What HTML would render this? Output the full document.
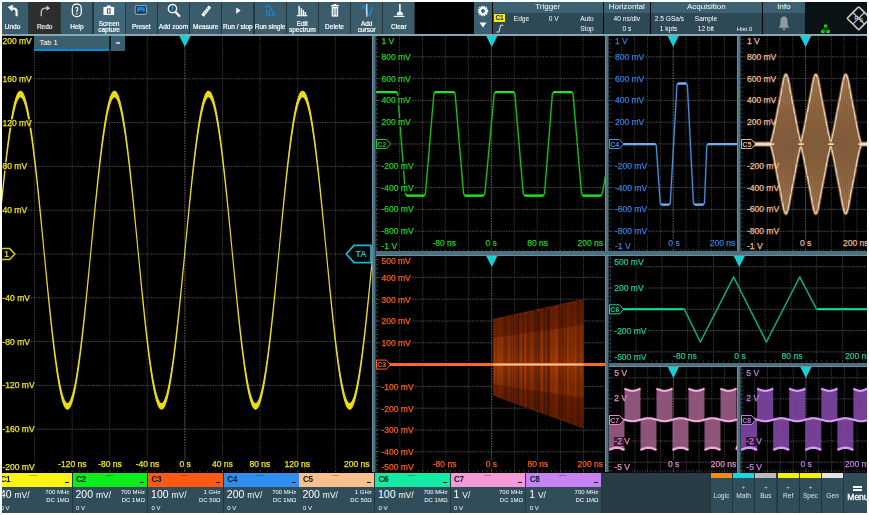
<!DOCTYPE html>
<html><head><meta charset="utf-8"><title>Oscilloscope</title>
<style>
html,body{margin:0;padding:0;background:#fff;}
body{width:869px;height:515px;position:relative;overflow:hidden;font-family:"Liberation Sans", sans-serif;}
#scr{position:absolute;left:2px;top:2px;width:865px;height:510.6px;background:#000;overflow:hidden;}
.abs{position:absolute;}
.tb{position:absolute;top:0;height:31.8px;background:#3a5c6b;color:#fff;font-size:6.5px;text-align:center;line-height:6.2px;}
.tb .lb{position:absolute;left:-4px;right:-4px;bottom:3.4px;white-space:nowrap;-webkit-text-stroke:.2px currentColor;}
.tb .lb2{position:absolute;left:-4px;right:-4px;bottom:0.8px;white-space:nowrap;-webkit-text-stroke:.2px currentColor;}
.tb svg{position:absolute;left:50%;top:1.2px;margin-left:-7.8px;}
.pn{position:absolute;top:0;height:31.8px;background:#2d4955;color:#fff;font-size:6.6px;}
.pn .tt{position:absolute;left:0;right:0;top:0;height:10.5px;background:#3c6271;text-align:center;line-height:10.5px;font-size:8px;}
.pn span{position:absolute;white-space:nowrap;line-height:8px;}
.plot{position:absolute;background:#000;overflow:hidden;}
.yl,.xl,.xr{-webkit-text-stroke:.25px currentColor;}
.yl{position:absolute;left:5px;font-size:8.5px;line-height:9px;white-space:nowrap;background:rgba(0,0,0,.6);padding:0 1px 0 0;}
.xl{position:absolute;font-size:8.5px;line-height:9px;white-space:nowrap;transform:translateX(-50%);background:rgba(0,0,0,.6);}
.xr{position:absolute;font-size:8.5px;line-height:9px;white-space:nowrap;background:rgba(0,0,0,.6);}
.ch{position:absolute;top:470.5px;height:40.1px;background:#304d59;color:#fff;}
.ch .hd{position:absolute;left:0;right:0;top:0;height:14px;color:#0a1a20;font-weight:bold;font-size:8.2px;letter-spacing:-.4px;line-height:14px;}
.ch .hd b{position:absolute;left:3.5px;}
.ch .hd i{position:absolute;right:3px;bottom:3.2px;width:4px;height:1.6px;background:#111;}
.ch .hd u{position:absolute;left:33px;top:2px;width:7px;height:1px;background:rgba(0,0,0,.25);}
.ch .sc{position:absolute;left:3px;top:15.5px;font-size:10.5px;line-height:12px;white-space:nowrap;}
.ch .sc small{font-size:8.5px;}
.ch .r1,.ch .r2{position:absolute;right:2.5px;font-size:6px;line-height:7px;white-space:nowrap;text-align:right;}
.ch .r1{top:16px;} .ch .r2{top:24px;}
.ch .of{position:absolute;left:3.5px;top:32.5px;font-size:6px;line-height:7px;}
.rb{position:absolute;top:470.5px;height:40.1px;background:#304d59;color:#fff;font-size:6.6px;text-align:center;}
.rb .cb{position:absolute;left:0;right:0;top:0;height:5px;}
.rb .pl{position:absolute;left:0;right:0;top:11.6px;font-size:6px;line-height:6px;color:#d0d8dc}
.rb .lb{position:absolute;left:-3px;right:-3px;top:19.6px;line-height:8px;color:#dde4e6}
#in{position:absolute;left:0;top:0;width:865px;height:510.6px;filter:blur(0.7px);}
</style></head><body><div id="scr"><div id="in">

<div class="tb" style="left:-5.1px;width:31.2px;background:#3a5c6b;color:#fff"><svg width="15.6" height="14.5" viewBox="0 0 14 13"><path d="M10.4 11.8 V7.6 Q10.4 5 7.8 5 H6" fill="none" stroke="#fff" stroke-width="1.9"/><path d="M2.4 3.6 L7.2 1.6 L6.4 7.6 Z" fill="#fff"/></svg><div class="lb">Undo</div></div>
<div class="tb" style="left:27.1px;width:31.2px;background:#2e2e2e;color:#eee"><svg width="15.6" height="14.5" viewBox="0 0 14 13"><path d="M3.8 11.8 V8.6 Q3.8 4.6 7.6 4.6 H9" fill="none" stroke="#c8c8c8" stroke-width="1.1"/><path d="M11.8 4.6 L8.6 2.2 V7 Z" fill="#c8c8c8"/></svg><div class="lb">Redo</div></div>
<div class="tb" style="left:59.3px;width:31.2px;background:#3a5c6b;color:#fff"><svg width="15.6" height="14.5" viewBox="0 0 14 13"><rect x="3" y="1" width="8" height="11.2" rx="3.6" fill="none" stroke="#fff" stroke-width="1.1"/><path d="M5.8 4.4 Q7.9 3.2 7.9 5.2 Q7.9 6.3 7 7 L7 8.2" fill="none" stroke="#fff" stroke-width="1"/><circle cx="7" cy="9.7" r=".65" fill="#fff"/></svg><div class="lb">Help</div></div>
<div class="tb" style="left:91.5px;width:31.2px;background:#41687a;color:#fff"><svg width="15.6" height="14.5" viewBox="0 0 14 13"><path d="M2.2 3.6 H4.8 L5.6 2.2 H8.4 L9.2 3.6 H11.8 V10.8 H2.2 Z" fill="#fff"/><rect x="5.3" y="4.8" width="3.4" height="4.8" fill="#3f6677"/><rect x="6.35" y="5.6" width="1.3" height="3.2" fill="#fff"/></svg><div class="lb2">Screen<br>capture</div></div>
<div class="tb" style="left:123.7px;width:31.2px;background:#3a5c6b;color:#fff"><svg width="15.6" height="14.5" viewBox="0 0 14 13"><rect x="2" y="2.2" width="10.2" height="8" rx="1.4" fill="#1a3a55" stroke="#8aa2ad" stroke-width="1"/><rect x="3.6" y="3.6" width="7" height="4.4" fill="#1583d8"/><rect x="5.2" y="6.8" width="3.8" height="2.2" fill="#1a3a55"/></svg><div class="lb">Preset</div></div>
<div class="tb" style="left:155.9px;width:31.2px;background:#3a5c6b;color:#fff"><svg width="15.6" height="14.5" viewBox="0 0 14 13"><circle cx="5.8" cy="5" r="3.7" fill="#27434f" stroke="#fff" stroke-width="1.3"/><path d="M8.6 8 L12 11.6" stroke="#fff" stroke-width="2" stroke-linecap="round"/><path d="M5.8 2.4 L7.8 4.8 H6.6 V7.2 H5 V4.8 H3.8 Z" fill="#1a8ae0"/></svg><div class="lb">Add zoom</div></div>
<div class="tb" style="left:188.1px;width:31.2px;background:#3a5c6b;color:#fff"><svg width="15.6" height="14.5" viewBox="0 0 14 13"><path d="M3 10.6 L9.6 2.2 L11.8 4 L5.2 12.4 Z" fill="#fff"/><path d="M5.4 8.4 L6.6 9.4 M6.8 6.6 L8 7.6 M8.2 4.8 L9.4 5.8" stroke="#3a5c6b" stroke-width=".7"/></svg><div class="lb">Measure</div></div>
<div class="tb" style="left:220.3px;width:31.2px;background:#3a5c6b;color:#fff"><svg width="15.6" height="14.5" viewBox="0 0 14 13"><path d="M5.6 4 L9.6 6.8 L5.6 9.6 Z" fill="#fff"/></svg><div class="lb">Run / stop</div></div>
<div class="tb" style="left:252.5px;width:31.2px;background:#3a5c6b;color:#fff"><svg width="15.6" height="14.5" viewBox="0 0 14 13"><path d="M2.8 4.4 Q5 0.6 7 3.6 L9.6 8" fill="none" stroke="#1a8ae0" stroke-width="1.2"/><path d="M4.4 5.4 V11.6" fill="none" stroke="#1a8ae0" stroke-width="1"/><text x="5" y="11.4" font-size="6.2" font-weight="bold" fill="#1a8ae0" font-family="Liberation Sans, sans-serif">1x</text></svg><div class="lb">Run single</div></div>
<div class="tb" style="left:284.7px;width:31.2px;background:#3a5c6b;color:#fff"><svg width="15.6" height="14.5" viewBox="0 0 14 13"><path d="M2.4 11.4 H12" stroke="#fff" stroke-width="1"/><path d="M4.6 11.4 V2.4 M6.6 11.4 V4.6 M8.4 11.4 V6.2 M10.2 11.4 V8" stroke="#fff" stroke-width="1.3"/></svg><div class="lb2">Edit<br>spectrum</div></div>
<div class="tb" style="left:316.9px;width:31.2px;background:#3a5c6b;color:#fff"><svg width="15.6" height="14.5" viewBox="0 0 14 13"><rect x="4.2" y="3.6" width="5.8" height="8.6" fill="#fff"/><rect x="3.6" y="1.8" width="7" height="1.3" fill="#fff"/><rect x="5.8" y="0.9" width="2.6" height="1" fill="#fff"/><path d="M5.7 4.8 V11 M7.1 4.8 V11 M8.5 4.8 V11" stroke="#3a5c6b" stroke-width=".6"/></svg><div class="lb">Delete</div></div>
<div class="tb" style="left:349.1px;width:31.2px;background:#3a5c6b;color:#fff"><svg width="15.6" height="14.5" viewBox="0 0 14 13"><path d="M2.4 5.6 Q3.6 0.2 5.4 4.4 L7.8 9.6 Q9.6 13 10.6 8 L11.6 3.6" fill="none" stroke="#1a8ae0" stroke-width="1.2"/><path d="M7 1 V12.4" stroke="#fff" stroke-width="1"/></svg><div class="lb2">Add<br>cursor</div></div>
<div class="tb" style="left:381.3px;width:31.2px;background:#3a5c6b;color:#fff"><svg width="15.6" height="14.5" viewBox="0 0 14 13"><path d="M8 1 V8" stroke="#fff" stroke-width="1.4"/><path d="M5 11 L6 8 H10 L11 11 Z" fill="#fff"/><path d="M2.4 12 H12.2" stroke="#fff" stroke-width=".9"/></svg><div class="lb">Clear</div></div>
<div class="abs" style="left:0;top:0;width:413.0px;height:31.8px;background:#24383f;z-index:-1"></div>
<div class="pn" style="left:472.2px;width:18px;background:#3a6070"><svg class="abs" style="left:2px;top:1px" width="14" height="30" viewBox="0 0 14 30"><circle cx="7" cy="8" r="3.1" fill="none" stroke="#fff" stroke-width="2.3"/><circle cx="7" cy="8" r="4.6" fill="none" stroke="#fff" stroke-width="1.3" stroke-dasharray="1.45 0.96"/><path d="M3.6 19.5 H10.4 L7 24.5 Z" fill="#fff"/></svg></div>
<div class="pn" style="left:490.8px;width:110px"><div class="tt">Trigger</div><span style="left:1.5px;top:12.4px;width:10.4px;height:7.6px;background:#f4ec1a;color:#222;font-weight:bold;font-size:6.4px;line-height:7.6px;text-align:center">C1</span><span style="left:21px;top:12.5px">Edge</span><span style="left:56px;top:12.5px">0 V</span><span style="right:9px;top:12.5px">Auto</span><span style="right:9px;top:22.5px">Stop</span><svg class="abs" style="left:3px;top:22px" width="8" height="9" viewBox="0 0 8 9"><path d="M0.5 8 H3 L4.6 1.2 H7.4" fill="none" stroke="#fff" stroke-width=".9"/></svg></div>
<div class="pn" style="left:601.6px;width:46.4px"><div class="tt">Horizontal</div><span style="left:0;right:0;top:12.5px;text-align:center">40 ns/div</span><span style="left:0;right:0;top:22.5px;text-align:center">0 s</span></div>
<div class="pn" style="left:648.8px;width:111px"><div class="tt">Acquisition</div><span style="left:4px;top:12.5px">2.5 GSa/s</span><span style="left:44px;top:12.5px">Sample</span><span style="left:9px;top:22.5px">1 kpts</span><span style="left:47px;top:22.5px">12 bit</span><span style="left:86px;top:22.5px;font-size:6px">Hist 0</span></div>
<div class="pn" style="left:760.8px;width:42px"><div class="tt">Info</div><svg class="abs" style="left:14px;top:13px" width="14" height="17" viewBox="0 0 14 17"><path d="M7 1.4 C9.8 1.4 10.6 4 10.6 7.4 C10.6 10.6 11.4 11.8 12.4 12.8 H1.6 C2.6 11.8 3.4 10.6 3.4 7.4 C3.4 4 4.2 1.4 7 1.4 Z" fill="#8f9a9f"/><rect x="5.6" y="13.4" width="2.8" height="1.6" fill="#8f9a9f"/></svg></div>
<div class="abs" style="left:803.0px;top:0;width:62px;height:31.8px;background:#0b1213"><svg class="abs" style="left:0;top:0" width="62" height="32" viewBox="0 0 62 32"><circle cx="20.5" cy="24" r="1.7" fill="#18e018"/><circle cx="18" cy="29.4" r="1.9" fill="#18e018"/><circle cx="23" cy="29.4" r="1.9" fill="#18e018"/><path d="M20.5 24 L18 29.4 H23 Z" fill="none" stroke="#0f8a0f" stroke-width=".8"/><g transform="translate(53.7,16.3) rotate(45)" fill="none" stroke="#c4c8c8" stroke-width="1.6"><rect x="-8.2" y="-8.2" width="16.4" height="16.4" rx="1"/><path d="M-8.2 0 H8.2 M0 -8.2 V8.2" stroke-width="1.2"/></g><text x="49.4" y="17.6" font-size="5.6" fill="#c4c8c8" font-family="Liberation Sans, sans-serif" font-weight="bold">R</text><text x="54.6" y="20" font-size="5.6" fill="#c4c8c8" font-family="Liberation Sans, sans-serif" font-weight="bold">S</text></svg></div>
<div class="abs" style="left:0;top:31.8px;width:865px;height:2px;background:#86a8b5"></div>
<div class="plot" style="left:0.0px;top:33.8px;width:369.5px;height:436.7px;color:#efe312"><svg class="abs" style="left:0;top:0" width="369.5" height="436.7" viewBox="0 0 369.5 436.7"><g stroke="#7c7c7c" stroke-width="1" stroke-dasharray="1.5 1.1" fill="none" opacity=".64"><path d="M32.5 0 V436.7" opacity=".72"/><path d="M70.1 0 V436.7" opacity=".72"/><path d="M107.7 0 V436.7" opacity=".72"/><path d="M145.3 0 V436.7" opacity=".72"/><path d="M182.9 0 V436.7" opacity=".72"/><path d="M220.5 0 V436.7" opacity=".72"/><path d="M258.1 0 V436.7" opacity=".72"/><path d="M295.7 0 V436.7" opacity=".72"/><path d="M333.3 0 V436.7" opacity=".72"/><path d="M0 42.8 H369.5" /><path d="M0 86.6 H369.5" /><path d="M0 130.4 H369.5" /><path d="M0 174.2 H369.5" /><path d="M0 218.0 H369.5" /><path d="M0 261.8 H369.5" /><path d="M0 305.6 H369.5" /><path d="M0 349.4 H369.5" /><path d="M0 393.2 H369.5" /></g><path d="M182.9 0 V436.7" stroke="#9a9a9a" stroke-width=".9" stroke-dasharray="1.3 1.5" opacity=".6"/><g stroke="#888" stroke-width=".7" opacity=".5"><path d="M2.4 434.2 V436.7"/><path d="M9.9 434.2 V436.7"/><path d="M17.5 434.2 V436.7"/><path d="M25.0 434.2 V436.7"/><path d="M32.5 434.2 V436.7"/><path d="M40.0 434.2 V436.7"/><path d="M47.5 434.2 V436.7"/><path d="M55.1 434.2 V436.7"/><path d="M62.6 434.2 V436.7"/><path d="M70.1 434.2 V436.7"/><path d="M77.6 434.2 V436.7"/><path d="M85.1 434.2 V436.7"/><path d="M92.7 434.2 V436.7"/><path d="M100.2 434.2 V436.7"/><path d="M107.7 434.2 V436.7"/><path d="M115.2 434.2 V436.7"/><path d="M122.7 434.2 V436.7"/><path d="M130.3 434.2 V436.7"/><path d="M137.8 434.2 V436.7"/><path d="M145.3 434.2 V436.7"/><path d="M152.8 434.2 V436.7"/><path d="M160.3 434.2 V436.7"/><path d="M167.9 434.2 V436.7"/><path d="M175.4 434.2 V436.7"/><path d="M182.9 434.2 V436.7"/><path d="M190.4 434.2 V436.7"/><path d="M197.9 434.2 V436.7"/><path d="M205.5 434.2 V436.7"/><path d="M213.0 434.2 V436.7"/><path d="M220.5 434.2 V436.7"/><path d="M228.0 434.2 V436.7"/><path d="M235.5 434.2 V436.7"/><path d="M243.1 434.2 V436.7"/><path d="M250.6 434.2 V436.7"/><path d="M258.1 434.2 V436.7"/><path d="M265.6 434.2 V436.7"/><path d="M273.1 434.2 V436.7"/><path d="M280.7 434.2 V436.7"/><path d="M288.2 434.2 V436.7"/><path d="M295.7 434.2 V436.7"/><path d="M303.2 434.2 V436.7"/><path d="M310.7 434.2 V436.7"/><path d="M318.3 434.2 V436.7"/><path d="M325.8 434.2 V436.7"/><path d="M333.3 434.2 V436.7"/><path d="M340.8 434.2 V436.7"/><path d="M348.3 434.2 V436.7"/><path d="M355.9 434.2 V436.7"/><path d="M363.4 434.2 V436.7"/></g></svg><svg class="abs" style="left:0;top:0" width="369.5" height="436.7" viewBox="0 0 369.5 436.7"><polygon points="-2.0,181.3 -1.0,171.0 0.0,160.9 1.0,151.0 2.0,141.4 3.0,132.2 4.0,123.2 5.0,114.7 6.0,106.7 7.0,99.1 8.0,92.0 9.0,85.5 10.0,79.6 11.0,74.2 12.0,69.5 13.0,65.4 14.0,62.0 15.0,59.3 16.0,57.2 17.0,55.9 18.0,55.3 19.0,55.3 20.0,56.1 21.0,57.6 22.0,59.8 23.0,62.6 24.0,66.2 25.0,70.4 26.0,75.2 27.0,80.7 28.0,86.8 29.0,93.4 30.0,100.6 31.0,108.3 32.0,116.4 33.0,125.0 34.0,134.0 35.0,143.3 36.0,153.0 37.0,162.9 38.0,173.1 39.0,183.4 40.0,193.9 41.0,204.5 42.0,215.1 43.0,225.7 44.0,236.2 45.0,246.7 46.0,257.0 47.0,267.1 48.0,277.0 49.0,286.6 50.0,295.9 51.0,304.8 52.0,313.4 53.0,321.4 54.0,329.0 55.0,336.1 56.0,342.7 57.0,348.6 58.0,354.0 59.0,358.7 60.0,362.8 61.0,366.3 62.0,369.0 63.0,371.1 64.0,372.5 65.0,373.1 66.0,373.1 67.0,372.3 68.0,370.9 69.0,368.7 70.0,365.9 71.0,362.3 72.0,358.2 73.0,353.3 74.0,347.9 75.0,341.8 76.0,335.2 77.0,328.1 78.0,320.4 79.0,312.3 80.0,303.7 81.0,294.7 82.0,285.4 83.0,275.8 84.0,265.8 85.0,255.7 86.0,245.4 87.0,234.9 88.0,224.3 89.0,213.7 90.0,203.1 91.0,192.5 92.0,182.1 93.0,171.7 94.0,161.6 95.0,151.7 96.0,142.1 97.0,132.8 98.0,123.9 99.0,115.3 100.0,107.2 101.0,99.6 102.0,92.5 103.0,86.0 104.0,80.0 105.0,74.6 106.0,69.8 107.0,65.7 108.0,62.2 109.0,59.5 110.0,57.4 111.0,56.0 112.0,55.3 113.0,55.3 114.0,56.0 115.0,57.5 116.0,59.6 117.0,62.4 118.0,65.9 119.0,70.1 120.0,74.9 121.0,80.3 122.0,86.3 123.0,92.9 124.0,100.1 125.0,107.7 126.0,115.8 127.0,124.4 128.0,133.3 129.0,142.7 130.0,152.3 131.0,162.2 132.0,172.4 133.0,182.7 134.0,193.2 135.0,203.7 136.0,214.3 137.0,224.9 138.0,235.5 139.0,246.0 140.0,256.3 141.0,266.4 142.0,276.4 143.0,286.0 144.0,295.3 145.0,304.2 146.0,312.8 147.0,320.9 148.0,328.5 149.0,335.6 150.0,342.2 151.0,348.2 152.0,353.6 153.0,358.4 154.0,362.6 155.0,366.1 156.0,368.9 157.0,371.0 158.0,372.4 159.0,373.1 160.0,373.1 161.0,372.4 162.0,371.0 163.0,368.9 164.0,366.1 165.0,362.6 166.0,358.5 167.0,353.7 168.0,348.3 169.0,342.3 170.0,335.7 171.0,328.6 172.0,321.0 173.0,312.9 174.0,304.3 175.0,295.4 176.0,286.1 177.0,276.4 178.0,266.5 179.0,256.4 180.0,246.1 181.0,235.6 182.0,225.1 183.0,214.4 184.0,203.8 185.0,193.3 186.0,182.8 187.0,172.5 188.0,162.3 189.0,152.4 190.0,142.8 191.0,133.4 192.0,124.5 193.0,115.9 194.0,107.8 195.0,100.1 196.0,93.0 197.0,86.4 198.0,80.4 199.0,74.9 200.0,70.1 201.0,66.0 202.0,62.5 203.0,59.6 204.0,57.5 205.0,56.0 206.0,55.3 207.0,55.3 208.0,56.0 209.0,57.3 210.0,59.4 211.0,62.2 212.0,65.7 213.0,69.8 214.0,74.5 215.0,79.9 216.0,85.9 217.0,92.5 218.0,99.5 219.0,107.2 220.0,115.2 221.0,123.8 222.0,132.7 223.0,142.0 224.0,151.6 225.0,161.5 226.0,171.6 227.0,182.0 228.0,192.4 229.0,203.0 230.0,213.6 231.0,224.2 232.0,234.8 233.0,245.2 234.0,255.6 235.0,265.7 236.0,275.7 237.0,285.3 238.0,294.6 239.0,303.6 240.0,312.2 241.0,320.3 242.0,328.0 243.0,335.2 244.0,341.8 245.0,347.8 246.0,353.3 247.0,358.1 248.0,362.3 249.0,365.8 250.0,368.7 251.0,370.9 252.0,372.3 253.0,373.1 254.0,373.1 255.0,372.5 256.0,371.1 257.0,369.1 258.0,366.3 259.0,362.9 260.0,358.8 261.0,354.0 262.0,348.7 263.0,342.7 264.0,336.2 265.0,329.1 266.0,321.5 267.0,313.4 268.0,304.9 269.0,296.0 270.0,286.7 271.0,277.1 272.0,267.2 273.0,257.1 274.0,246.8 275.0,236.4 276.0,225.8 277.0,215.2 278.0,204.6 279.0,194.0 280.0,183.5 281.0,173.2 282.0,163.0 283.0,153.1 284.0,143.4 285.0,134.1 286.0,125.1 287.0,116.5 288.0,108.3 289.0,100.7 290.0,93.5 291.0,86.8 292.0,80.8 293.0,75.3 294.0,70.4 295.0,66.2 296.0,62.7 297.0,59.8 298.0,57.6 299.0,56.1 300.0,55.3 301.0,55.3 302.0,55.9 303.0,57.2 304.0,59.3 305.0,62.0 306.0,65.4 307.0,69.5 308.0,74.2 309.0,79.5 310.0,85.5 311.0,92.0 312.0,99.0 313.0,106.6 314.0,114.7 315.0,123.2 316.0,132.1 317.0,141.3 318.0,150.9 319.0,160.8 320.0,170.9 321.0,181.2 322.0,191.7 323.0,202.2 324.0,212.8 325.0,223.5 326.0,234.0 327.0,244.5 328.0,254.9 329.0,265.0 330.0,275.0 331.0,284.6 332.0,294.0 333.0,303.0 334.0,311.6 335.0,319.8 336.0,327.5 337.0,334.7 338.0,341.3 339.0,347.4 340.0,352.9 341.0,357.8 342.0,362.0 343.0,365.6 344.0,368.5 345.0,370.7 346.0,372.2 347.0,373.1 348.0,373.2 349.0,372.5 350.0,371.2 351.0,369.2 352.0,366.5 353.0,363.1 354.0,359.1 355.0,354.4 356.0,349.1 357.0,343.2 358.0,336.7 359.0,329.6 360.0,322.1 361.0,314.0 362.0,305.5 363.0,296.7 364.0,287.4 365.0,277.8 366.0,267.9 367.0,257.8 368.0,247.5 369.0,237.1 370.0,226.5 370.5,221.0 369.5,231.2 368.5,241.4 367.5,251.4 366.5,261.2 365.5,270.9 364.5,280.3 363.5,289.4 362.5,298.1 361.5,306.5 360.5,314.5 359.5,322.0 358.5,329.1 357.5,335.6 356.5,341.6 355.5,347.1 354.5,351.9 353.5,356.1 352.5,359.7 351.5,362.6 350.5,364.9 349.5,366.5 348.5,367.4 347.5,367.7 346.5,367.3 345.5,366.1 344.5,364.3 343.5,361.9 342.5,358.7 341.5,355.0 340.5,350.5 339.5,345.5 338.5,339.9 337.5,333.8 336.5,327.1 335.5,319.9 334.5,312.2 333.5,304.1 332.5,295.6 331.5,286.8 330.5,277.6 329.5,268.1 328.5,258.4 327.5,248.5 326.5,238.4 325.5,228.3 324.5,218.0 323.5,207.8 322.5,197.5 321.5,187.4 320.5,177.4 319.5,167.5 318.5,157.9 317.5,148.4 316.5,139.3 315.5,130.6 314.5,122.2 313.5,114.2 312.5,106.6 311.5,99.5 310.5,93.0 309.5,87.0 308.5,81.5 307.5,76.7 306.5,72.4 305.5,68.8 304.5,65.9 303.5,63.6 302.5,61.9 301.5,61.0 300.5,60.7 299.5,61.1 298.5,62.2 297.5,64.0 296.5,66.4 295.5,69.6 294.5,73.3 293.5,77.7 292.5,82.7 291.5,88.3 290.5,94.4 289.5,101.1 288.5,108.2 287.5,115.9 286.5,124.0 285.5,132.5 284.5,141.3 283.5,150.5 282.5,160.0 281.5,169.7 280.5,179.6 279.5,189.6 278.5,199.8 277.5,210.0 276.5,220.3 275.5,230.5 274.5,240.6 273.5,250.7 272.5,260.6 271.5,270.2 270.5,279.6 269.5,288.7 268.5,297.5 267.5,306.0 266.5,314.0 265.5,321.5 264.5,328.6 263.5,335.2 262.5,341.2 261.5,346.7 260.5,351.6 259.5,355.8 258.5,359.5 257.5,362.5 256.5,364.8 255.5,366.4 254.5,367.4 253.5,367.7 252.5,367.3 251.5,366.2 250.5,364.5 249.5,362.0 248.5,359.0 247.5,355.2 246.5,350.9 245.5,345.9 244.5,340.4 243.5,334.2 242.5,327.6 241.5,320.4 240.5,312.8 239.5,304.7 238.5,296.2 237.5,287.4 236.5,278.2 235.5,268.8 234.5,259.1 233.5,249.2 232.5,239.1 231.5,229.0 230.5,218.7 229.5,208.5 228.5,198.3 227.5,188.1 226.5,178.1 225.5,168.2 224.5,158.5 223.5,149.1 222.5,140.0 221.5,131.2 220.5,122.7 219.5,114.7 218.5,107.1 217.5,100.0 216.5,93.4 215.5,87.4 214.5,81.9 213.5,77.0 212.5,72.7 211.5,69.0 210.5,66.0 209.5,63.7 208.5,62.0 207.5,61.0 206.5,60.7 205.5,61.1 204.5,62.1 203.5,63.9 202.5,66.3 201.5,69.3 200.5,73.0 199.5,77.4 198.5,82.3 197.5,87.8 196.5,93.9 195.5,100.6 194.5,107.7 193.5,115.3 192.5,123.4 191.5,131.9 190.5,140.7 189.5,149.8 188.5,159.3 187.5,169.0 186.5,178.9 185.5,188.9 184.5,199.1 183.5,209.3 182.5,219.6 181.5,229.8 180.5,239.9 179.5,250.0 178.5,259.9 177.5,269.5 176.5,279.0 175.5,288.1 174.5,296.9 173.5,305.4 172.5,313.4 171.5,321.0 170.5,328.1 169.5,334.7 168.5,340.8 167.5,346.3 166.5,351.2 165.5,355.6 164.5,359.2 163.5,362.3 162.5,364.6 161.5,366.3 160.5,367.4 159.5,367.7 158.5,367.4 157.5,366.3 156.5,364.6 155.5,362.2 154.5,359.2 153.5,355.5 152.5,351.2 151.5,346.3 150.5,340.8 149.5,334.7 148.5,328.1 147.5,320.9 146.5,313.3 145.5,305.3 144.5,296.8 143.5,288.0 142.5,278.9 141.5,269.4 140.5,259.8 139.5,249.9 138.5,239.8 137.5,229.7 136.5,219.5 135.5,209.2 134.5,199.0 133.5,188.8 132.5,178.8 131.5,168.9 130.5,159.2 129.5,149.7 128.5,140.6 127.5,131.8 126.5,123.3 125.5,115.3 124.5,107.6 123.5,100.5 122.5,93.9 121.5,87.8 120.5,82.3 119.5,77.3 118.5,73.0 117.5,69.3 116.5,66.2 115.5,63.8 114.5,62.1 113.5,61.1 112.5,60.7 111.5,61.0 110.5,62.0 109.5,63.7 108.5,66.1 107.5,69.1 106.5,72.7 105.5,77.0 104.5,81.9 103.5,87.4 102.5,93.5 101.5,100.1 100.5,107.2 99.5,114.8 98.5,122.8 97.5,131.2 96.5,140.1 95.5,149.2 94.5,158.6 93.5,168.3 92.5,178.2 91.5,188.2 90.5,198.4 89.5,208.6 88.5,218.8 87.5,229.1 86.5,239.2 85.5,249.3 84.5,259.2 83.5,268.9 82.5,278.3 81.5,287.5 80.5,296.3 79.5,304.8 78.5,312.9 77.5,320.5 76.5,327.7 75.5,334.3 74.5,340.4 73.5,346.0 72.5,350.9 71.5,355.3 70.5,359.0 69.5,362.1 68.5,364.5 67.5,366.2 66.5,367.3 65.5,367.7 64.5,367.4 63.5,366.4 62.5,364.8 61.5,362.4 60.5,359.4 59.5,355.8 58.5,351.5 57.5,346.6 56.5,341.2 55.5,335.1 54.5,328.5 53.5,321.5 52.5,313.9 51.5,305.9 50.5,297.5 49.5,288.7 48.5,279.5 47.5,270.1 46.5,260.5 45.5,250.6 44.5,240.5 43.5,230.4 42.5,220.2 41.5,209.9 40.5,199.7 39.5,189.5 38.5,179.5 37.5,169.6 36.5,159.9 35.5,150.4 34.5,141.2 33.5,132.4 32.5,123.9 31.5,115.8 30.5,108.2 29.5,101.0 28.5,94.3 27.5,88.2 26.5,82.6 25.5,77.6 24.5,73.3 23.5,69.5 22.5,66.4 21.5,64.0 20.5,62.2 19.5,61.1 18.5,60.7 17.5,61.0 16.5,61.9 15.5,63.6 14.5,65.9 13.5,68.8 12.5,72.5 11.5,76.7 10.5,81.6 9.5,87.0 8.5,93.1 7.5,99.6 6.5,106.7 5.5,114.2 4.5,122.2 3.5,130.6 2.5,139.4 1.5,148.5 0.5,157.9 -0.5,167.6 -1.5,177.5" fill="#e9dc12" stroke="#e9dc12" stroke-width="1.15" stroke-linejoin="round"/><path d="M177.3 0 H188.5 L182.9 11 Z" fill="#19cfd6"/><path d="M-3 212.4 H7.6 L12.8 218.0 L7.6 223.6 H-3 Z" fill="#000" stroke="#d8cc10" stroke-width="1.5"/><text x="4.6" y="221.0" font-size="8.4" font-weight="bold" text-anchor="middle" fill="#d8cc10" font-family="Liberation Sans, sans-serif">1</text><path d="M369.0 209.4 H352.0 L344.3 218.0 L352.0 226.6 H369.0 Z" fill="#000" stroke="#19bcc8" stroke-width="1.7"/><text x="359.0" y="221.1" font-size="8.6" font-weight="bold" text-anchor="middle" fill="#19bcc8" font-family="Liberation Sans, sans-serif">TA</text></svg><div class="yl" style="left:0.5px;top:1.2px">200 mV</div><div class="yl" style="left:0.5px;top:39.1px">160 mV</div><div class="yl" style="left:0.5px;top:82.9px">120 mV</div><div class="yl" style="left:0.5px;top:126.7px">80 mV</div><div class="yl" style="left:0.5px;top:170.5px">40 mV</div><div class="yl" style="left:0.5px;top:258.1px">-40 mV</div><div class="yl" style="left:0.5px;top:301.9px">-80 mV</div><div class="yl" style="left:0.5px;top:345.7px">-120 mV</div><div class="yl" style="left:0.5px;top:389.5px">-160 mV</div><div class="yl" style="left:0.5px;top:427.3px">-200 mV</div><div class="xl" style="left:70.3px;top:424.0px">-120 ns</div><div class="xl" style="left:107.9px;top:424.0px">-80 ns</div><div class="xl" style="left:145.5px;top:424.0px">-40 ns</div><div class="xl" style="left:183.2px;top:424.0px">0 s</div><div class="xl" style="left:220.3px;top:424.0px">40 ns</div><div class="xl" style="left:257.9px;top:424.0px">80 ns</div><div class="xl" style="left:295.3px;top:424.0px">120 ns</div><div class="xr" style="right:2px;top:424.0px">200 ns</div><div class="abs" style="left:32.0px;top:0;width:75.3px;height:13.4px;background:#3a6070;border-bottom:2px solid #0a8ad8;color:#fff;font-size:7.4px;line-height:14px;"><span style="margin-left:5.5px">Tab 1</span></div><div class="abs" style="left:107.3px;top:0;width:1.4px;height:15.4px;background:#14232a"></div><div class="abs" style="left:108.7px;top:0;width:14.1px;height:15.4px;background:#3a6070;"><div class="abs" style="left:5.2px;top:6.4px;width:4px;height:1.4px;background:#b8c8cf"></div></div></div>
<div class="plot" style="left:373.5px;top:33.8px;width:229.5px;height:215.7px;color:#1fd01f"><svg class="abs" style="left:0;top:0" width="229.5" height="215.7" viewBox="0 0 229.5 215.7"><g stroke="#7c7c7c" stroke-width="1" stroke-dasharray="1.5 1.1" fill="none" opacity=".64"><path d="M0.6 0 V215.7" opacity=".72"/><path d="M23.5 0 V215.7" opacity=".72"/><path d="M46.5 0 V215.7" opacity=".72"/><path d="M69.4 0 V215.7" opacity=".72"/><path d="M92.4 0 V215.7" opacity=".72"/><path d="M115.3 0 V215.7" opacity=".72"/><path d="M138.2 0 V215.7" opacity=".72"/><path d="M161.2 0 V215.7" opacity=".72"/><path d="M184.2 0 V215.7" opacity=".72"/><path d="M207.1 0 V215.7" opacity=".72"/><path d="M0 20.8 H229.5" /><path d="M0 42.6 H229.5" /><path d="M0 64.4 H229.5" /><path d="M0 86.2 H229.5" /><path d="M0 108.0 H229.5" /><path d="M0 129.8 H229.5" /><path d="M0 151.6 H229.5" /><path d="M0 173.4 H229.5" /><path d="M0 195.2 H229.5" /></g><path d="M115.3 0 V215.7" stroke="#9a9a9a" stroke-width=".9" stroke-dasharray="1.3 1.5" opacity=".6"/><g stroke="#888" stroke-width=".7" opacity=".5"><path d="M0.6 213.2 V215.7"/><path d="M5.1 213.2 V215.7"/><path d="M9.7 213.2 V215.7"/><path d="M14.3 213.2 V215.7"/><path d="M18.9 213.2 V215.7"/><path d="M23.5 213.2 V215.7"/><path d="M28.1 213.2 V215.7"/><path d="M32.7 213.2 V215.7"/><path d="M37.3 213.2 V215.7"/><path d="M41.9 213.2 V215.7"/><path d="M46.5 213.2 V215.7"/><path d="M51.0 213.2 V215.7"/><path d="M55.6 213.2 V215.7"/><path d="M60.2 213.2 V215.7"/><path d="M64.8 213.2 V215.7"/><path d="M69.4 213.2 V215.7"/><path d="M74.0 213.2 V215.7"/><path d="M78.6 213.2 V215.7"/><path d="M83.2 213.2 V215.7"/><path d="M87.8 213.2 V215.7"/><path d="M92.4 213.2 V215.7"/><path d="M96.9 213.2 V215.7"/><path d="M101.5 213.2 V215.7"/><path d="M106.1 213.2 V215.7"/><path d="M110.7 213.2 V215.7"/><path d="M115.3 213.2 V215.7"/><path d="M119.9 213.2 V215.7"/><path d="M124.5 213.2 V215.7"/><path d="M129.1 213.2 V215.7"/><path d="M133.7 213.2 V215.7"/><path d="M138.3 213.2 V215.7"/><path d="M142.8 213.2 V215.7"/><path d="M147.4 213.2 V215.7"/><path d="M152.0 213.2 V215.7"/><path d="M156.6 213.2 V215.7"/><path d="M161.2 213.2 V215.7"/><path d="M165.8 213.2 V215.7"/><path d="M170.4 213.2 V215.7"/><path d="M175.0 213.2 V215.7"/><path d="M179.6 213.2 V215.7"/><path d="M184.2 213.2 V215.7"/><path d="M188.7 213.2 V215.7"/><path d="M193.3 213.2 V215.7"/><path d="M197.9 213.2 V215.7"/><path d="M202.5 213.2 V215.7"/><path d="M207.1 213.2 V215.7"/><path d="M211.7 213.2 V215.7"/><path d="M216.3 213.2 V215.7"/><path d="M220.9 213.2 V215.7"/><path d="M225.5 213.2 V215.7"/><path d="M0 3.4 H2.5"/><path d="M0 7.7 H2.5"/><path d="M0 12.1 H2.5"/><path d="M0 16.4 H2.5"/><path d="M0 20.8 H2.5"/><path d="M0 25.2 H2.5"/><path d="M0 29.5 H2.5"/><path d="M0 33.9 H2.5"/><path d="M0 38.2 H2.5"/><path d="M0 42.6 H2.5"/><path d="M0 47.0 H2.5"/><path d="M0 51.3 H2.5"/><path d="M0 55.7 H2.5"/><path d="M0 60.0 H2.5"/><path d="M0 64.4 H2.5"/><path d="M0 68.8 H2.5"/><path d="M0 73.1 H2.5"/><path d="M0 77.5 H2.5"/><path d="M0 81.8 H2.5"/><path d="M0 86.2 H2.5"/><path d="M0 90.6 H2.5"/><path d="M0 94.9 H2.5"/><path d="M0 99.3 H2.5"/><path d="M0 103.6 H2.5"/><path d="M0 108.0 H2.5"/><path d="M0 112.4 H2.5"/><path d="M0 116.7 H2.5"/><path d="M0 121.1 H2.5"/><path d="M0 125.4 H2.5"/><path d="M0 129.8 H2.5"/><path d="M0 134.2 H2.5"/><path d="M0 138.5 H2.5"/><path d="M0 142.9 H2.5"/><path d="M0 147.2 H2.5"/><path d="M0 151.6 H2.5"/><path d="M0 156.0 H2.5"/><path d="M0 160.3 H2.5"/><path d="M0 164.7 H2.5"/><path d="M0 169.0 H2.5"/><path d="M0 173.4 H2.5"/><path d="M0 177.8 H2.5"/><path d="M0 182.1 H2.5"/><path d="M0 186.5 H2.5"/><path d="M0 190.8 H2.5"/><path d="M0 195.2 H2.5"/><path d="M0 199.6 H2.5"/><path d="M0 203.9 H2.5"/><path d="M0 208.3 H2.5"/><path d="M0 212.6 H2.5"/></g></svg><svg class="abs" style="left:0;top:0" width="229.5" height="215.7" viewBox="0 0 229.5 215.7"><path d="M-0.5 56.2 L19.0 56.2 Q21.6 56.2 21.8 58.8 L29.3 157.0 Q29.5 159.6 32.1 159.6 L46.7 159.6 Q49.3 159.6 49.5 157.0 L57.8 58.8 Q58.0 56.2 60.6 56.2 L76.4 56.2 Q79.0 56.2 79.2 58.8 L87.5 157.0 Q87.7 159.6 90.3 159.6 L106.1 159.6 Q108.7 159.6 108.9 157.0 L118.1 58.8 Q118.3 56.2 120.9 56.2 L136.1 56.2 Q138.7 56.2 138.9 58.8 L147.2 157.0 Q147.4 159.6 150.0 159.6 L165.8 159.6 Q168.4 159.6 168.6 157.0 L176.3 58.8 Q176.5 56.2 179.1 56.2 L194.3 56.2 Q196.9 56.2 197.1 58.8 L205.5 157.0 Q205.7 159.6 208.3 159.6 L223.5 159.6 Q226.1 159.6 226.5 157.0 L230.5 134.2" fill="none" stroke="#0e8f10" stroke-width="2.2" opacity=".35"/><path d="M-0.5 56.2 L19.0 56.2 Q21.6 56.2 21.8 58.8 L29.3 157.0 Q29.5 159.6 32.1 159.6 L46.7 159.6 Q49.3 159.6 49.5 157.0 L57.8 58.8 Q58.0 56.2 60.6 56.2 L76.4 56.2 Q79.0 56.2 79.2 58.8 L87.5 157.0 Q87.7 159.6 90.3 159.6 L106.1 159.6 Q108.7 159.6 108.9 157.0 L118.1 58.8 Q118.3 56.2 120.9 56.2 L136.1 56.2 Q138.7 56.2 138.9 58.8 L147.2 157.0 Q147.4 159.6 150.0 159.6 L165.8 159.6 Q168.4 159.6 168.6 157.0 L176.3 58.8 Q176.5 56.2 179.1 56.2 L194.3 56.2 Q196.9 56.2 197.1 58.8 L205.5 157.0 Q205.7 159.6 208.3 159.6 L223.5 159.6 Q226.1 159.6 226.5 157.0 L230.5 134.2" fill="none" stroke="#1cc01c" stroke-width="1.15"/><g stroke="#24e224" stroke-width="2.3" stroke-linecap="round" fill="none"><path d="M1.1 56.2 H20.0"/><path d="M31.1 159.6 H47.7"/><path d="M59.6 56.2 H77.4"/><path d="M89.3 159.6 H107.1"/><path d="M119.9 56.2 H137.1"/><path d="M149.0 159.6 H166.8"/><path d="M178.1 56.2 H195.3"/><path d="M207.3 159.6 H224.5"/></g><path d="M110.2 0 H121.4 L115.8 11 Z" fill="#19cfd6"/><path d="M0.5 103.5 H10.5 L14.5 108.0 L10.5 112.5 H0.5 Z" fill="#000" stroke="#1fd01f" stroke-width="1"/><text x="5.8" y="110.6" font-size="7" font-weight="bold" text-anchor="middle" fill="#1fd01f" font-family="Liberation Sans, sans-serif">C2</text></svg><div class="yl" style="left:6px;top:1.2px">1 V</div><div class="yl" style="left:6px;top:17.1px">800 mV</div><div class="yl" style="left:6px;top:38.9px">600 mV</div><div class="yl" style="left:6px;top:60.7px">400 mV</div><div class="yl" style="left:6px;top:82.5px">200 mV</div><div class="yl" style="left:6px;top:126.1px">-200 mV</div><div class="yl" style="left:6px;top:147.9px">-400 mV</div><div class="yl" style="left:6px;top:169.7px">-600 mV</div><div class="yl" style="left:6px;top:191.5px">-800 mV</div><div class="yl" style="left:6px;top:206.3px">-1 V</div><div class="xl" style="left:68.7px;top:203.4px">-80 ns</div><div class="xl" style="left:115.7px;top:203.4px">0 s</div><div class="xl" style="left:162.1px;top:203.4px">80 ns</div><div class="xr" style="right:2px;top:203.4px">200 ns</div></div>
<div class="plot" style="left:607.0px;top:33.8px;width:128.3px;height:215.7px;color:#2f7fe0"><svg class="abs" style="left:0;top:0" width="128.3" height="215.7" viewBox="0 0 128.3 215.7"><g stroke="#7c7c7c" stroke-width="1" stroke-dasharray="1.5 1.1" fill="none" opacity=".64"><path d="M12.9 0 V215.7" opacity=".72"/><path d="M25.7 0 V215.7" opacity=".72"/><path d="M38.5 0 V215.7" opacity=".72"/><path d="M51.4 0 V215.7" opacity=".72"/><path d="M64.2 0 V215.7" opacity=".72"/><path d="M77.0 0 V215.7" opacity=".72"/><path d="M89.9 0 V215.7" opacity=".72"/><path d="M102.7 0 V215.7" opacity=".72"/><path d="M115.5 0 V215.7" opacity=".72"/><path d="M0 20.8 H128.3" /><path d="M0 42.6 H128.3" /><path d="M0 64.4 H128.3" /><path d="M0 86.2 H128.3" /><path d="M0 108.0 H128.3" /><path d="M0 129.8 H128.3" /><path d="M0 151.6 H128.3" /><path d="M0 173.4 H128.3" /><path d="M0 195.2 H128.3" /></g><path d="M64.2 0 V215.7" stroke="#9a9a9a" stroke-width=".9" stroke-dasharray="1.3 1.5" opacity=".6"/><g stroke="#888" stroke-width=".7" opacity=".5"><path d="M0.1 213.2 V215.7"/><path d="M2.6 213.2 V215.7"/><path d="M5.2 213.2 V215.7"/><path d="M7.7 213.2 V215.7"/><path d="M10.3 213.2 V215.7"/><path d="M12.9 213.2 V215.7"/><path d="M15.4 213.2 V215.7"/><path d="M18.0 213.2 V215.7"/><path d="M20.6 213.2 V215.7"/><path d="M23.1 213.2 V215.7"/><path d="M25.7 213.2 V215.7"/><path d="M28.3 213.2 V215.7"/><path d="M30.8 213.2 V215.7"/><path d="M33.4 213.2 V215.7"/><path d="M36.0 213.2 V215.7"/><path d="M38.5 213.2 V215.7"/><path d="M41.1 213.2 V215.7"/><path d="M43.7 213.2 V215.7"/><path d="M46.2 213.2 V215.7"/><path d="M48.8 213.2 V215.7"/><path d="M51.4 213.2 V215.7"/><path d="M53.9 213.2 V215.7"/><path d="M56.5 213.2 V215.7"/><path d="M59.1 213.2 V215.7"/><path d="M61.6 213.2 V215.7"/><path d="M64.2 213.2 V215.7"/><path d="M66.8 213.2 V215.7"/><path d="M69.3 213.2 V215.7"/><path d="M71.9 213.2 V215.7"/><path d="M74.5 213.2 V215.7"/><path d="M77.0 213.2 V215.7"/><path d="M79.6 213.2 V215.7"/><path d="M82.2 213.2 V215.7"/><path d="M84.7 213.2 V215.7"/><path d="M87.3 213.2 V215.7"/><path d="M89.9 213.2 V215.7"/><path d="M92.4 213.2 V215.7"/><path d="M95.0 213.2 V215.7"/><path d="M97.6 213.2 V215.7"/><path d="M100.1 213.2 V215.7"/><path d="M102.7 213.2 V215.7"/><path d="M105.3 213.2 V215.7"/><path d="M107.8 213.2 V215.7"/><path d="M110.4 213.2 V215.7"/><path d="M113.0 213.2 V215.7"/><path d="M115.5 213.2 V215.7"/><path d="M118.1 213.2 V215.7"/><path d="M120.7 213.2 V215.7"/><path d="M123.2 213.2 V215.7"/><path d="M125.8 213.2 V215.7"/><path d="M0 3.4 H2.5"/><path d="M0 7.7 H2.5"/><path d="M0 12.1 H2.5"/><path d="M0 16.4 H2.5"/><path d="M0 20.8 H2.5"/><path d="M0 25.2 H2.5"/><path d="M0 29.5 H2.5"/><path d="M0 33.9 H2.5"/><path d="M0 38.2 H2.5"/><path d="M0 42.6 H2.5"/><path d="M0 47.0 H2.5"/><path d="M0 51.3 H2.5"/><path d="M0 55.7 H2.5"/><path d="M0 60.0 H2.5"/><path d="M0 64.4 H2.5"/><path d="M0 68.8 H2.5"/><path d="M0 73.1 H2.5"/><path d="M0 77.5 H2.5"/><path d="M0 81.8 H2.5"/><path d="M0 86.2 H2.5"/><path d="M0 90.6 H2.5"/><path d="M0 94.9 H2.5"/><path d="M0 99.3 H2.5"/><path d="M0 103.6 H2.5"/><path d="M0 108.0 H2.5"/><path d="M0 112.4 H2.5"/><path d="M0 116.7 H2.5"/><path d="M0 121.1 H2.5"/><path d="M0 125.4 H2.5"/><path d="M0 129.8 H2.5"/><path d="M0 134.2 H2.5"/><path d="M0 138.5 H2.5"/><path d="M0 142.9 H2.5"/><path d="M0 147.2 H2.5"/><path d="M0 151.6 H2.5"/><path d="M0 156.0 H2.5"/><path d="M0 160.3 H2.5"/><path d="M0 164.7 H2.5"/><path d="M0 169.0 H2.5"/><path d="M0 173.4 H2.5"/><path d="M0 177.8 H2.5"/><path d="M0 182.1 H2.5"/><path d="M0 186.5 H2.5"/><path d="M0 190.8 H2.5"/><path d="M0 195.2 H2.5"/><path d="M0 199.6 H2.5"/><path d="M0 203.9 H2.5"/><path d="M0 208.3 H2.5"/><path d="M0 212.6 H2.5"/></g></svg><svg class="abs" style="left:0;top:0" width="128.3" height="215.7" viewBox="0 0 128.3 215.7"><path d="M-1.0 108.1 L45.0 108.1 Q47.2 108.1 47.3 110.3 L51.2 166.4 Q51.3 168.6 53.5 168.6 L59.0 168.6 Q61.2 168.6 61.3 166.4 L67.9 49.7 Q68.0 47.5 70.2 47.5 L76.1 47.5 Q78.3 47.5 78.4 49.7 L84.4 166.4 Q84.5 168.6 86.7 168.6 L93.2 168.6 Q95.4 168.6 95.5 166.4 L97.8 110.3 Q97.9 108.1 100.1 108.1 L129.0 108.1" fill="none" stroke="#1f5fae" stroke-width="2.2" opacity=".35"/><path d="M-1.0 108.1 L45.0 108.1 Q47.2 108.1 47.3 110.3 L51.2 166.4 Q51.3 168.6 53.5 168.6 L59.0 168.6 Q61.2 168.6 61.3 166.4 L67.9 49.7 Q68.0 47.5 70.2 47.5 L76.1 47.5 Q78.3 47.5 78.4 49.7 L84.4 166.4 Q84.5 168.6 86.7 168.6 L93.2 168.6 Q95.4 168.6 95.5 166.4 L97.8 110.3 Q97.9 108.1 100.1 108.1 L129.0 108.1" fill="none" stroke="#4c90dc" stroke-width="1.15"/><g stroke="#6cb0f4" stroke-width="2.3" stroke-linecap="round" fill="none"><path d="M0.6 108.1 H45.6"/><path d="M52.9 168.6 H59.6"/><path d="M69.6 47.5 H76.7"/><path d="M86.1 168.6 H93.8"/><path d="M99.5 108.1 H127.4"/></g><path d="M58.6 0 H69.8 L64.2 11 Z" fill="#19cfd6"/><path d="M0.5 103.5 H10.5 L14.5 108.0 L10.5 112.5 H0.5 Z" fill="#000" stroke="#3f8fe8" stroke-width="1"/><text x="5.8" y="110.6" font-size="7" font-weight="bold" text-anchor="middle" fill="#3f8fe8" font-family="Liberation Sans, sans-serif">C4</text></svg><div class="yl" style="left:6px;top:1.2px">1 V</div><div class="yl" style="left:6px;top:17.1px">800 mV</div><div class="yl" style="left:6px;top:38.9px">600 mV</div><div class="yl" style="left:6px;top:60.7px">400 mV</div><div class="yl" style="left:6px;top:82.5px">200 mV</div><div class="yl" style="left:6px;top:126.1px">-200 mV</div><div class="yl" style="left:6px;top:147.9px">-400 mV</div><div class="yl" style="left:6px;top:169.7px">-600 mV</div><div class="yl" style="left:6px;top:191.5px">-800 mV</div><div class="yl" style="left:6px;top:206.3px">-1 V</div><div class="xl" style="left:65.0px;top:203.4px">0 s</div><div class="xr" style="right:2px;top:203.4px">200 ns</div></div>
<div class="plot" style="left:739.0px;top:33.8px;width:126.0px;height:215.7px;color:#e9b98f"><svg class="abs" style="left:0;top:0" width="126.0" height="215.7" viewBox="0 0 126.0 215.7"><g stroke="#7c7c7c" stroke-width="1" stroke-dasharray="1.5 1.1" fill="none" opacity=".64"><path d="M13.3 0 V215.7" opacity=".72"/><path d="M26.1 0 V215.7" opacity=".72"/><path d="M38.9 0 V215.7" opacity=".72"/><path d="M51.8 0 V215.7" opacity=".72"/><path d="M64.6 0 V215.7" opacity=".72"/><path d="M77.4 0 V215.7" opacity=".72"/><path d="M90.3 0 V215.7" opacity=".72"/><path d="M103.1 0 V215.7" opacity=".72"/><path d="M115.9 0 V215.7" opacity=".72"/><path d="M0 20.8 H126.0" /><path d="M0 42.6 H126.0" /><path d="M0 64.4 H126.0" /><path d="M0 86.2 H126.0" /><path d="M0 108.0 H126.0" /><path d="M0 129.8 H126.0" /><path d="M0 151.6 H126.0" /><path d="M0 173.4 H126.0" /><path d="M0 195.2 H126.0" /></g><path d="M64.6 0 V215.7" stroke="#9a9a9a" stroke-width=".9" stroke-dasharray="1.3 1.5" opacity=".6"/><g stroke="#888" stroke-width=".7" opacity=".5"><path d="M0.5 213.2 V215.7"/><path d="M3.0 213.2 V215.7"/><path d="M5.6 213.2 V215.7"/><path d="M8.1 213.2 V215.7"/><path d="M10.7 213.2 V215.7"/><path d="M13.3 213.2 V215.7"/><path d="M15.8 213.2 V215.7"/><path d="M18.4 213.2 V215.7"/><path d="M21.0 213.2 V215.7"/><path d="M23.5 213.2 V215.7"/><path d="M26.1 213.2 V215.7"/><path d="M28.7 213.2 V215.7"/><path d="M31.2 213.2 V215.7"/><path d="M33.8 213.2 V215.7"/><path d="M36.4 213.2 V215.7"/><path d="M38.9 213.2 V215.7"/><path d="M41.5 213.2 V215.7"/><path d="M44.1 213.2 V215.7"/><path d="M46.6 213.2 V215.7"/><path d="M49.2 213.2 V215.7"/><path d="M51.8 213.2 V215.7"/><path d="M54.3 213.2 V215.7"/><path d="M56.9 213.2 V215.7"/><path d="M59.5 213.2 V215.7"/><path d="M62.0 213.2 V215.7"/><path d="M64.6 213.2 V215.7"/><path d="M67.2 213.2 V215.7"/><path d="M69.7 213.2 V215.7"/><path d="M72.3 213.2 V215.7"/><path d="M74.9 213.2 V215.7"/><path d="M77.4 213.2 V215.7"/><path d="M80.0 213.2 V215.7"/><path d="M82.6 213.2 V215.7"/><path d="M85.1 213.2 V215.7"/><path d="M87.7 213.2 V215.7"/><path d="M90.3 213.2 V215.7"/><path d="M92.8 213.2 V215.7"/><path d="M95.4 213.2 V215.7"/><path d="M98.0 213.2 V215.7"/><path d="M100.5 213.2 V215.7"/><path d="M103.1 213.2 V215.7"/><path d="M105.7 213.2 V215.7"/><path d="M108.2 213.2 V215.7"/><path d="M110.8 213.2 V215.7"/><path d="M113.4 213.2 V215.7"/><path d="M115.9 213.2 V215.7"/><path d="M118.5 213.2 V215.7"/><path d="M121.1 213.2 V215.7"/><path d="M123.6 213.2 V215.7"/><path d="M0 3.4 H2.5"/><path d="M0 7.7 H2.5"/><path d="M0 12.1 H2.5"/><path d="M0 16.4 H2.5"/><path d="M0 20.8 H2.5"/><path d="M0 25.2 H2.5"/><path d="M0 29.5 H2.5"/><path d="M0 33.9 H2.5"/><path d="M0 38.2 H2.5"/><path d="M0 42.6 H2.5"/><path d="M0 47.0 H2.5"/><path d="M0 51.3 H2.5"/><path d="M0 55.7 H2.5"/><path d="M0 60.0 H2.5"/><path d="M0 64.4 H2.5"/><path d="M0 68.8 H2.5"/><path d="M0 73.1 H2.5"/><path d="M0 77.5 H2.5"/><path d="M0 81.8 H2.5"/><path d="M0 86.2 H2.5"/><path d="M0 90.6 H2.5"/><path d="M0 94.9 H2.5"/><path d="M0 99.3 H2.5"/><path d="M0 103.6 H2.5"/><path d="M0 108.0 H2.5"/><path d="M0 112.4 H2.5"/><path d="M0 116.7 H2.5"/><path d="M0 121.1 H2.5"/><path d="M0 125.4 H2.5"/><path d="M0 129.8 H2.5"/><path d="M0 134.2 H2.5"/><path d="M0 138.5 H2.5"/><path d="M0 142.9 H2.5"/><path d="M0 147.2 H2.5"/><path d="M0 151.6 H2.5"/><path d="M0 156.0 H2.5"/><path d="M0 160.3 H2.5"/><path d="M0 164.7 H2.5"/><path d="M0 169.0 H2.5"/><path d="M0 173.4 H2.5"/><path d="M0 177.8 H2.5"/><path d="M0 182.1 H2.5"/><path d="M0 186.5 H2.5"/><path d="M0 190.8 H2.5"/><path d="M0 195.2 H2.5"/><path d="M0 199.6 H2.5"/><path d="M0 203.9 H2.5"/><path d="M0 208.3 H2.5"/><path d="M0 212.6 H2.5"/></g></svg><svg class="abs" style="left:0;top:0" width="126.0" height="215.7" viewBox="0 0 126.0 215.7"><defs><linearGradient id="gp" x1="0" y1="0" x2="0" y2="1"><stop offset="0" stop-color="#a87a54"/><stop offset=".3" stop-color="#8e6644"/><stop offset=".5" stop-color="#86603f"/><stop offset=".7" stop-color="#8e6644"/><stop offset="1" stop-color="#a87a54"/></linearGradient></defs><polygon points="0.0,107.2 0.5,107.2 1.0,107.2 1.5,107.2 2.0,107.2 2.5,107.2 3.0,107.2 3.5,107.2 4.0,107.2 4.5,107.2 5.0,107.2 5.5,107.2 6.0,107.2 6.5,107.2 7.0,107.2 7.5,107.2 8.0,107.2 8.5,107.2 9.0,107.2 9.5,107.2 10.0,107.2 10.5,107.2 11.0,107.2 11.5,107.2 12.0,107.2 12.5,107.2 13.0,107.2 13.5,107.2 14.0,107.2 14.5,107.2 15.0,107.2 15.5,107.2 16.0,107.2 16.5,107.2 17.0,107.2 17.5,107.2 18.0,107.2 18.5,107.2 19.0,107.2 19.5,107.2 20.0,107.2 20.5,107.2 21.0,107.2 21.5,107.2 22.0,107.2 22.5,107.2 23.0,107.2 23.5,107.2 24.0,107.2 24.5,107.2 25.0,107.2 25.5,107.2 26.0,107.2 26.5,107.2 27.0,107.2 27.5,107.2 28.0,107.2 28.5,107.2 29.0,107.2 29.5,107.2 30.0,106.1 30.5,104.8 31.0,103.1 31.5,101.2 32.0,99.1 32.5,96.9 33.0,94.6 33.5,92.2 34.0,89.6 34.5,86.9 35.0,84.2 35.5,81.5 36.0,78.8 36.5,76.2 37.0,73.7 37.5,71.1 38.0,68.6 38.5,66.1 39.0,63.5 39.5,61.0 40.0,58.2 40.5,55.4 41.0,52.6 41.5,49.8 42.0,47.1 42.5,44.8 43.0,42.7 43.5,40.9 44.0,39.6 44.5,38.8 45.0,38.5 45.5,39.0 46.0,40.1 46.5,41.6 47.0,43.5 47.5,45.7 48.0,48.2 48.5,50.9 49.0,53.7 49.5,56.6 50.0,59.3 50.5,62.0 51.0,64.6 51.5,67.1 52.0,69.6 52.5,72.1 53.0,74.7 53.5,77.3 54.0,79.9 54.5,82.6 55.0,85.3 55.5,88.0 56.0,90.7 56.5,93.2 57.0,95.6 57.5,97.8 58.0,100.0 58.5,102.0 59.0,103.8 59.5,105.4 60.0,105.9 60.5,104.5 61.0,102.7 61.5,100.8 62.0,98.7 62.5,96.5 63.0,94.2 63.5,91.7 64.0,89.1 64.5,86.4 65.0,83.7 65.5,81.0 66.0,78.3 66.5,75.7 67.0,73.2 67.5,70.6 68.0,68.1 68.5,65.6 69.0,63.0 69.5,60.4 70.0,57.7 70.5,54.9 71.0,52.0 71.5,49.2 72.0,46.6 72.5,44.4 73.0,42.3 73.5,40.6 74.0,39.4 74.5,38.7 75.0,38.6 75.5,39.2 76.0,40.4 76.5,41.9 77.0,43.9 77.5,46.2 78.0,48.7 78.5,51.5 79.0,54.3 79.5,57.1 80.0,59.9 80.5,62.5 81.0,65.1 81.5,67.6 82.0,70.1 82.5,72.7 83.0,75.2 83.5,77.8 84.0,80.4 84.5,83.1 85.0,85.8 85.5,88.5 86.0,91.2 86.5,93.7 87.0,96.0 87.5,98.2 88.0,100.4 88.5,102.4 89.0,104.2 89.5,105.6 90.0,105.6 90.5,104.2 91.0,102.4 91.5,100.4 92.0,98.2 92.5,96.0 93.0,93.7 93.5,91.2 94.0,88.5 94.5,85.8 95.0,83.1 95.5,80.4 96.0,77.8 96.5,75.2 97.0,72.7 97.5,70.1 98.0,67.6 98.5,65.1 99.0,62.5 99.5,59.9 100.0,57.1 100.5,54.3 101.0,51.5 101.5,48.7 102.0,46.2 102.5,43.9 103.0,41.9 103.5,40.4 104.0,39.2 104.5,38.6 105.0,38.7 105.5,39.4 106.0,40.6 106.5,42.3 107.0,44.4 107.5,46.6 108.0,49.2 108.5,52.0 109.0,54.9 109.5,57.7 110.0,60.4 110.5,63.0 111.0,65.6 111.5,68.1 112.0,70.6 112.5,73.2 113.0,75.7 113.5,78.3 114.0,81.0 114.5,83.7 115.0,86.4 115.5,89.1 116.0,91.7 116.5,94.2 117.0,96.5 117.5,98.7 118.0,100.8 118.5,102.7 119.0,104.5 119.5,105.9 120.0,107.2 120.5,107.2 121.0,107.2 121.5,107.2 122.0,107.2 122.5,107.2 123.0,107.2 123.5,107.2 124.0,107.2 124.5,107.2 125.0,107.2 125.5,107.2 126.0,107.2 126.0,109.0 125.5,109.0 125.0,109.0 124.5,109.0 124.0,109.0 123.5,109.0 123.0,109.0 122.5,109.0 122.0,109.0 121.5,109.0 121.0,109.0 120.5,109.0 120.0,109.0 119.5,110.3 119.0,111.7 118.5,113.5 118.0,115.4 117.5,117.5 117.0,119.7 116.5,122.0 116.0,124.5 115.5,127.1 115.0,129.8 114.5,132.5 114.0,135.2 113.5,137.9 113.0,140.5 112.5,143.0 112.0,145.6 111.5,148.1 111.0,150.6 110.5,153.2 110.0,155.8 109.5,158.5 109.0,161.3 108.5,164.2 108.0,167.0 107.5,169.6 107.0,171.8 106.5,173.9 106.0,175.6 105.5,176.8 105.0,177.5 104.5,177.6 104.0,177.0 103.5,175.8 103.0,174.3 102.5,172.3 102.0,170.0 101.5,167.5 101.0,164.7 100.5,161.9 100.0,159.1 99.5,156.3 99.0,153.7 98.5,151.1 98.0,148.6 97.5,146.1 97.0,143.5 96.5,141.0 96.0,138.4 95.5,135.8 95.0,133.1 94.5,130.4 94.0,127.7 93.5,125.0 93.0,122.5 92.5,120.2 92.0,118.0 91.5,115.8 91.0,113.8 90.5,112.0 90.0,110.6 89.5,110.6 89.0,112.0 88.5,113.8 88.0,115.8 87.5,118.0 87.0,120.2 86.5,122.5 86.0,125.0 85.5,127.7 85.0,130.4 84.5,133.1 84.0,135.8 83.5,138.4 83.0,141.0 82.5,143.5 82.0,146.1 81.5,148.6 81.0,151.1 80.5,153.7 80.0,156.3 79.5,159.1 79.0,161.9 78.5,164.7 78.0,167.5 77.5,170.0 77.0,172.3 76.5,174.3 76.0,175.8 75.5,177.0 75.0,177.6 74.5,177.5 74.0,176.8 73.5,175.6 73.0,173.9 72.5,171.8 72.0,169.6 71.5,167.0 71.0,164.2 70.5,161.3 70.0,158.5 69.5,155.8 69.0,153.2 68.5,150.6 68.0,148.1 67.5,145.6 67.0,143.0 66.5,140.5 66.0,137.9 65.5,135.2 65.0,132.5 64.5,129.8 64.0,127.1 63.5,124.5 63.0,122.0 62.5,119.7 62.0,117.5 61.5,115.4 61.0,113.5 60.5,111.7 60.0,110.3 59.5,110.8 59.0,112.4 58.5,114.2 58.0,116.2 57.5,118.4 57.0,120.6 56.5,123.0 56.0,125.5 55.5,128.2 55.0,130.9 54.5,133.6 54.0,136.3 53.5,138.9 53.0,141.5 52.5,144.1 52.0,146.6 51.5,149.1 51.0,151.6 50.5,154.2 50.0,156.9 49.5,159.6 49.0,162.5 48.5,165.3 48.0,168.0 47.5,170.5 47.0,172.7 46.5,174.6 46.0,176.1 45.5,177.2 45.0,177.7 44.5,177.4 44.0,176.6 43.5,175.3 43.0,173.5 42.5,171.4 42.0,169.1 41.5,166.4 41.0,163.6 40.5,160.8 40.0,158.0 39.5,155.2 39.0,152.7 38.5,150.1 38.0,147.6 37.5,145.1 37.0,142.5 36.5,140.0 36.0,137.4 35.5,134.7 35.0,132.0 34.5,129.3 34.0,126.6 33.5,124.0 33.0,121.6 32.5,119.3 32.0,117.1 31.5,115.0 31.0,113.1 30.5,111.4 30.0,110.1 29.5,109.0 29.0,109.0 28.5,109.0 28.0,109.0 27.5,109.0 27.0,109.0 26.5,109.0 26.0,109.0 25.5,109.0 25.0,109.0 24.5,109.0 24.0,109.0 23.5,109.0 23.0,109.0 22.5,109.0 22.0,109.0 21.5,109.0 21.0,109.0 20.5,109.0 20.0,109.0 19.5,109.0 19.0,109.0 18.5,109.0 18.0,109.0 17.5,109.0 17.0,109.0 16.5,109.0 16.0,109.0 15.5,109.0 15.0,109.0 14.5,109.0 14.0,109.0 13.5,109.0 13.0,109.0 12.5,109.0 12.0,109.0 11.5,109.0 11.0,109.0 10.5,109.0 10.0,109.0 9.5,109.0 9.0,109.0 8.5,109.0 8.0,109.0 7.5,109.0 7.0,109.0 6.5,109.0 6.0,109.0 5.5,109.0 5.0,109.0 4.5,109.0 4.0,109.0 3.5,109.0 3.0,109.0 2.5,109.0 2.0,109.0 1.5,109.0 1.0,109.0 0.5,109.0 0.0,109.0" fill="none" stroke="#c89868" stroke-width="3.4" opacity=".55" stroke-linejoin="round"/><polygon points="0.0,107.2 0.5,107.2 1.0,107.2 1.5,107.2 2.0,107.2 2.5,107.2 3.0,107.2 3.5,107.2 4.0,107.2 4.5,107.2 5.0,107.2 5.5,107.2 6.0,107.2 6.5,107.2 7.0,107.2 7.5,107.2 8.0,107.2 8.5,107.2 9.0,107.2 9.5,107.2 10.0,107.2 10.5,107.2 11.0,107.2 11.5,107.2 12.0,107.2 12.5,107.2 13.0,107.2 13.5,107.2 14.0,107.2 14.5,107.2 15.0,107.2 15.5,107.2 16.0,107.2 16.5,107.2 17.0,107.2 17.5,107.2 18.0,107.2 18.5,107.2 19.0,107.2 19.5,107.2 20.0,107.2 20.5,107.2 21.0,107.2 21.5,107.2 22.0,107.2 22.5,107.2 23.0,107.2 23.5,107.2 24.0,107.2 24.5,107.2 25.0,107.2 25.5,107.2 26.0,107.2 26.5,107.2 27.0,107.2 27.5,107.2 28.0,107.2 28.5,107.2 29.0,107.2 29.5,107.2 30.0,106.1 30.5,104.8 31.0,103.1 31.5,101.2 32.0,99.1 32.5,96.9 33.0,94.6 33.5,92.2 34.0,89.6 34.5,86.9 35.0,84.2 35.5,81.5 36.0,78.8 36.5,76.2 37.0,73.7 37.5,71.1 38.0,68.6 38.5,66.1 39.0,63.5 39.5,61.0 40.0,58.2 40.5,55.4 41.0,52.6 41.5,49.8 42.0,47.1 42.5,44.8 43.0,42.7 43.5,40.9 44.0,39.6 44.5,38.8 45.0,38.5 45.5,39.0 46.0,40.1 46.5,41.6 47.0,43.5 47.5,45.7 48.0,48.2 48.5,50.9 49.0,53.7 49.5,56.6 50.0,59.3 50.5,62.0 51.0,64.6 51.5,67.1 52.0,69.6 52.5,72.1 53.0,74.7 53.5,77.3 54.0,79.9 54.5,82.6 55.0,85.3 55.5,88.0 56.0,90.7 56.5,93.2 57.0,95.6 57.5,97.8 58.0,100.0 58.5,102.0 59.0,103.8 59.5,105.4 60.0,105.9 60.5,104.5 61.0,102.7 61.5,100.8 62.0,98.7 62.5,96.5 63.0,94.2 63.5,91.7 64.0,89.1 64.5,86.4 65.0,83.7 65.5,81.0 66.0,78.3 66.5,75.7 67.0,73.2 67.5,70.6 68.0,68.1 68.5,65.6 69.0,63.0 69.5,60.4 70.0,57.7 70.5,54.9 71.0,52.0 71.5,49.2 72.0,46.6 72.5,44.4 73.0,42.3 73.5,40.6 74.0,39.4 74.5,38.7 75.0,38.6 75.5,39.2 76.0,40.4 76.5,41.9 77.0,43.9 77.5,46.2 78.0,48.7 78.5,51.5 79.0,54.3 79.5,57.1 80.0,59.9 80.5,62.5 81.0,65.1 81.5,67.6 82.0,70.1 82.5,72.7 83.0,75.2 83.5,77.8 84.0,80.4 84.5,83.1 85.0,85.8 85.5,88.5 86.0,91.2 86.5,93.7 87.0,96.0 87.5,98.2 88.0,100.4 88.5,102.4 89.0,104.2 89.5,105.6 90.0,105.6 90.5,104.2 91.0,102.4 91.5,100.4 92.0,98.2 92.5,96.0 93.0,93.7 93.5,91.2 94.0,88.5 94.5,85.8 95.0,83.1 95.5,80.4 96.0,77.8 96.5,75.2 97.0,72.7 97.5,70.1 98.0,67.6 98.5,65.1 99.0,62.5 99.5,59.9 100.0,57.1 100.5,54.3 101.0,51.5 101.5,48.7 102.0,46.2 102.5,43.9 103.0,41.9 103.5,40.4 104.0,39.2 104.5,38.6 105.0,38.7 105.5,39.4 106.0,40.6 106.5,42.3 107.0,44.4 107.5,46.6 108.0,49.2 108.5,52.0 109.0,54.9 109.5,57.7 110.0,60.4 110.5,63.0 111.0,65.6 111.5,68.1 112.0,70.6 112.5,73.2 113.0,75.7 113.5,78.3 114.0,81.0 114.5,83.7 115.0,86.4 115.5,89.1 116.0,91.7 116.5,94.2 117.0,96.5 117.5,98.7 118.0,100.8 118.5,102.7 119.0,104.5 119.5,105.9 120.0,107.2 120.5,107.2 121.0,107.2 121.5,107.2 122.0,107.2 122.5,107.2 123.0,107.2 123.5,107.2 124.0,107.2 124.5,107.2 125.0,107.2 125.5,107.2 126.0,107.2 126.0,109.0 125.5,109.0 125.0,109.0 124.5,109.0 124.0,109.0 123.5,109.0 123.0,109.0 122.5,109.0 122.0,109.0 121.5,109.0 121.0,109.0 120.5,109.0 120.0,109.0 119.5,110.3 119.0,111.7 118.5,113.5 118.0,115.4 117.5,117.5 117.0,119.7 116.5,122.0 116.0,124.5 115.5,127.1 115.0,129.8 114.5,132.5 114.0,135.2 113.5,137.9 113.0,140.5 112.5,143.0 112.0,145.6 111.5,148.1 111.0,150.6 110.5,153.2 110.0,155.8 109.5,158.5 109.0,161.3 108.5,164.2 108.0,167.0 107.5,169.6 107.0,171.8 106.5,173.9 106.0,175.6 105.5,176.8 105.0,177.5 104.5,177.6 104.0,177.0 103.5,175.8 103.0,174.3 102.5,172.3 102.0,170.0 101.5,167.5 101.0,164.7 100.5,161.9 100.0,159.1 99.5,156.3 99.0,153.7 98.5,151.1 98.0,148.6 97.5,146.1 97.0,143.5 96.5,141.0 96.0,138.4 95.5,135.8 95.0,133.1 94.5,130.4 94.0,127.7 93.5,125.0 93.0,122.5 92.5,120.2 92.0,118.0 91.5,115.8 91.0,113.8 90.5,112.0 90.0,110.6 89.5,110.6 89.0,112.0 88.5,113.8 88.0,115.8 87.5,118.0 87.0,120.2 86.5,122.5 86.0,125.0 85.5,127.7 85.0,130.4 84.5,133.1 84.0,135.8 83.5,138.4 83.0,141.0 82.5,143.5 82.0,146.1 81.5,148.6 81.0,151.1 80.5,153.7 80.0,156.3 79.5,159.1 79.0,161.9 78.5,164.7 78.0,167.5 77.5,170.0 77.0,172.3 76.5,174.3 76.0,175.8 75.5,177.0 75.0,177.6 74.5,177.5 74.0,176.8 73.5,175.6 73.0,173.9 72.5,171.8 72.0,169.6 71.5,167.0 71.0,164.2 70.5,161.3 70.0,158.5 69.5,155.8 69.0,153.2 68.5,150.6 68.0,148.1 67.5,145.6 67.0,143.0 66.5,140.5 66.0,137.9 65.5,135.2 65.0,132.5 64.5,129.8 64.0,127.1 63.5,124.5 63.0,122.0 62.5,119.7 62.0,117.5 61.5,115.4 61.0,113.5 60.5,111.7 60.0,110.3 59.5,110.8 59.0,112.4 58.5,114.2 58.0,116.2 57.5,118.4 57.0,120.6 56.5,123.0 56.0,125.5 55.5,128.2 55.0,130.9 54.5,133.6 54.0,136.3 53.5,138.9 53.0,141.5 52.5,144.1 52.0,146.6 51.5,149.1 51.0,151.6 50.5,154.2 50.0,156.9 49.5,159.6 49.0,162.5 48.5,165.3 48.0,168.0 47.5,170.5 47.0,172.7 46.5,174.6 46.0,176.1 45.5,177.2 45.0,177.7 44.5,177.4 44.0,176.6 43.5,175.3 43.0,173.5 42.5,171.4 42.0,169.1 41.5,166.4 41.0,163.6 40.5,160.8 40.0,158.0 39.5,155.2 39.0,152.7 38.5,150.1 38.0,147.6 37.5,145.1 37.0,142.5 36.5,140.0 36.0,137.4 35.5,134.7 35.0,132.0 34.5,129.3 34.0,126.6 33.5,124.0 33.0,121.6 32.5,119.3 32.0,117.1 31.5,115.0 31.0,113.1 30.5,111.4 30.0,110.1 29.5,109.0 29.0,109.0 28.5,109.0 28.0,109.0 27.5,109.0 27.0,109.0 26.5,109.0 26.0,109.0 25.5,109.0 25.0,109.0 24.5,109.0 24.0,109.0 23.5,109.0 23.0,109.0 22.5,109.0 22.0,109.0 21.5,109.0 21.0,109.0 20.5,109.0 20.0,109.0 19.5,109.0 19.0,109.0 18.5,109.0 18.0,109.0 17.5,109.0 17.0,109.0 16.5,109.0 16.0,109.0 15.5,109.0 15.0,109.0 14.5,109.0 14.0,109.0 13.5,109.0 13.0,109.0 12.5,109.0 12.0,109.0 11.5,109.0 11.0,109.0 10.5,109.0 10.0,109.0 9.5,109.0 9.0,109.0 8.5,109.0 8.0,109.0 7.5,109.0 7.0,109.0 6.5,109.0 6.0,109.0 5.5,109.0 5.0,109.0 4.5,109.0 4.0,109.0 3.5,109.0 3.0,109.0 2.5,109.0 2.0,109.0 1.5,109.0 1.0,109.0 0.5,109.0 0.0,109.0" fill="url(#gp)" stroke="#f0cfa8" stroke-width="1.4" stroke-linejoin="round"/><g stroke="#6a4a30" stroke-width=".7" opacity=".55"><path d="M30.5 105.8 V110.4"/><path d="M32.4 98.3 V117.9"/><path d="M34.3 89.0 V127.2"/><path d="M36.2 78.8 V137.4"/><path d="M38.1 69.1 V147.1"/><path d="M40.0 59.2 V157.0"/><path d="M41.9 48.6 V167.6"/><path d="M43.8 41.1 V175.1"/><path d="M45.7 40.4 V175.8"/><path d="M47.6 47.2 V169.0"/><path d="M49.5 57.6 V158.6"/><path d="M51.4 67.6 V148.6"/><path d="M53.3 77.2 V139.0"/><path d="M55.2 87.4 V128.8"/><path d="M57.1 97.0 V119.2"/><path d="M59.0 104.8 V111.4"/><path d="M60.9 104.1 V112.1"/><path d="M62.8 96.1 V120.1"/><path d="M64.7 86.3 V129.9"/><path d="M66.6 76.2 V140.0"/><path d="M68.5 66.6 V149.6"/><path d="M70.4 56.4 V159.8"/><path d="M72.3 46.3 V169.9"/><path d="M74.2 40.0 V176.2"/><path d="M76.1 41.6 V174.6"/><path d="M78.0 49.7 V166.5"/><path d="M79.9 60.3 V155.9"/><path d="M81.8 70.1 V146.1"/><path d="M83.7 79.8 V136.4"/><path d="M85.6 90.1 V126.1"/><path d="M87.5 99.2 V117.0"/><path d="M91.3 102.2 V114.0"/><path d="M93.2 93.7 V122.5"/><path d="M95.1 83.6 V132.6"/><path d="M97.0 73.7 V142.5"/><path d="M98.9 64.0 V152.2"/><path d="M100.8 53.6 V162.6"/><path d="M102.7 44.1 V172.1"/><path d="M104.6 39.5 V176.7"/><path d="M106.5 43.3 V172.9"/><path d="M108.4 52.5 V163.7"/><path d="M110.3 63.0 V153.2"/><path d="M112.2 72.6 V143.6"/><path d="M114.1 82.5 V133.7"/><path d="M116.0 92.7 V123.5"/><path d="M117.9 101.4 V114.8"/></g><path d="M0.0 108.1 H32.5 M58.0 108.1 H62.0 M88.0 108.1 H92.0 M118.0 108.1 H126.0" stroke="#f7dcc0" stroke-width="1.8" stroke-linecap="round" fill="none"/><path d="M59.0 0 H70.2 L64.6 11 Z" fill="#19cfd6"/><path d="M0.5 103.5 H10.5 L14.5 108.0 L10.5 112.5 H0.5 Z" fill="#000" stroke="#e8b488" stroke-width="1"/><text x="5.8" y="110.6" font-size="7" font-weight="bold" text-anchor="middle" fill="#e8b488" font-family="Liberation Sans, sans-serif">C5</text></svg><div class="yl" style="background:none;left:6px;top:1.2px">1 V</div><div class="yl" style="background:none;left:6px;top:17.1px">800 mV</div><div class="yl" style="background:none;left:6px;top:38.9px">600 mV</div><div class="yl" style="background:none;left:6px;top:60.7px">400 mV</div><div class="yl" style="background:none;left:6px;top:82.5px">200 mV</div><div class="yl" style="background:none;left:6px;top:126.1px">-200 mV</div><div class="yl" style="background:none;left:6px;top:147.9px">-400 mV</div><div class="yl" style="background:none;left:6px;top:169.7px">-600 mV</div><div class="yl" style="background:none;left:6px;top:191.5px">-800 mV</div><div class="yl" style="background:none;left:6px;top:206.3px">-1 V</div><div class="xl" style="left:64.7px;top:203.4px">0 s</div><div class="xr" style="right:-1.5px;top:203.4px">200 ns</div></div>
<div class="plot" style="left:373.5px;top:254.0px;width:229.5px;height:216.5px;color:#ff5a14"><svg class="abs" style="left:0;top:0" width="229.5" height="216.5" viewBox="0 0 229.5 216.5"><g stroke="#7c7c7c" stroke-width="1" stroke-dasharray="1.5 1.1" fill="none" opacity=".64"><path d="M0.9 0 V216.5" opacity=".72"/><path d="M23.9 0 V216.5" opacity=".72"/><path d="M46.8 0 V216.5" opacity=".72"/><path d="M69.8 0 V216.5" opacity=".72"/><path d="M92.7 0 V216.5" opacity=".72"/><path d="M115.7 0 V216.5" opacity=".72"/><path d="M138.6 0 V216.5" opacity=".72"/><path d="M161.6 0 V216.5" opacity=".72"/><path d="M184.5 0 V216.5" opacity=".72"/><path d="M207.5 0 V216.5" opacity=".72"/><path d="M0 21.4 H229.5" /><path d="M0 43.2 H229.5" /><path d="M0 65.0 H229.5" /><path d="M0 86.8 H229.5" /><path d="M0 108.6 H229.5" /><path d="M0 130.4 H229.5" /><path d="M0 152.2 H229.5" /><path d="M0 174.0 H229.5" /><path d="M0 195.8 H229.5" /></g><path d="M115.7 0 V216.5" stroke="#9a9a9a" stroke-width=".9" stroke-dasharray="1.3 1.5" opacity=".6"/><g stroke="#888" stroke-width=".7" opacity=".5"><path d="M0.9 214.0 V216.5"/><path d="M5.5 214.0 V216.5"/><path d="M10.1 214.0 V216.5"/><path d="M14.7 214.0 V216.5"/><path d="M19.3 214.0 V216.5"/><path d="M23.9 214.0 V216.5"/><path d="M28.5 214.0 V216.5"/><path d="M33.1 214.0 V216.5"/><path d="M37.7 214.0 V216.5"/><path d="M42.3 214.0 V216.5"/><path d="M46.8 214.0 V216.5"/><path d="M51.4 214.0 V216.5"/><path d="M56.0 214.0 V216.5"/><path d="M60.6 214.0 V216.5"/><path d="M65.2 214.0 V216.5"/><path d="M69.8 214.0 V216.5"/><path d="M74.4 214.0 V216.5"/><path d="M79.0 214.0 V216.5"/><path d="M83.6 214.0 V216.5"/><path d="M88.2 214.0 V216.5"/><path d="M92.8 214.0 V216.5"/><path d="M97.3 214.0 V216.5"/><path d="M101.9 214.0 V216.5"/><path d="M106.5 214.0 V216.5"/><path d="M111.1 214.0 V216.5"/><path d="M115.7 214.0 V216.5"/><path d="M120.3 214.0 V216.5"/><path d="M124.9 214.0 V216.5"/><path d="M129.5 214.0 V216.5"/><path d="M134.1 214.0 V216.5"/><path d="M138.7 214.0 V216.5"/><path d="M143.2 214.0 V216.5"/><path d="M147.8 214.0 V216.5"/><path d="M152.4 214.0 V216.5"/><path d="M157.0 214.0 V216.5"/><path d="M161.6 214.0 V216.5"/><path d="M166.2 214.0 V216.5"/><path d="M170.8 214.0 V216.5"/><path d="M175.4 214.0 V216.5"/><path d="M180.0 214.0 V216.5"/><path d="M184.6 214.0 V216.5"/><path d="M189.1 214.0 V216.5"/><path d="M193.7 214.0 V216.5"/><path d="M198.3 214.0 V216.5"/><path d="M202.9 214.0 V216.5"/><path d="M207.5 214.0 V216.5"/><path d="M212.1 214.0 V216.5"/><path d="M216.7 214.0 V216.5"/><path d="M221.3 214.0 V216.5"/><path d="M225.9 214.0 V216.5"/><path d="M0 4.0 H2.5"/><path d="M0 8.3 H2.5"/><path d="M0 12.7 H2.5"/><path d="M0 17.0 H2.5"/><path d="M0 21.4 H2.5"/><path d="M0 25.8 H2.5"/><path d="M0 30.1 H2.5"/><path d="M0 34.5 H2.5"/><path d="M0 38.8 H2.5"/><path d="M0 43.2 H2.5"/><path d="M0 47.6 H2.5"/><path d="M0 51.9 H2.5"/><path d="M0 56.3 H2.5"/><path d="M0 60.6 H2.5"/><path d="M0 65.0 H2.5"/><path d="M0 69.4 H2.5"/><path d="M0 73.7 H2.5"/><path d="M0 78.1 H2.5"/><path d="M0 82.4 H2.5"/><path d="M0 86.8 H2.5"/><path d="M0 91.2 H2.5"/><path d="M0 95.5 H2.5"/><path d="M0 99.9 H2.5"/><path d="M0 104.2 H2.5"/><path d="M0 108.6 H2.5"/><path d="M0 113.0 H2.5"/><path d="M0 117.3 H2.5"/><path d="M0 121.7 H2.5"/><path d="M0 126.0 H2.5"/><path d="M0 130.4 H2.5"/><path d="M0 134.8 H2.5"/><path d="M0 139.1 H2.5"/><path d="M0 143.5 H2.5"/><path d="M0 147.8 H2.5"/><path d="M0 152.2 H2.5"/><path d="M0 156.6 H2.5"/><path d="M0 160.9 H2.5"/><path d="M0 165.3 H2.5"/><path d="M0 169.6 H2.5"/><path d="M0 174.0 H2.5"/><path d="M0 178.4 H2.5"/><path d="M0 182.7 H2.5"/><path d="M0 187.1 H2.5"/><path d="M0 191.4 H2.5"/><path d="M0 195.8 H2.5"/><path d="M0 200.2 H2.5"/><path d="M0 204.5 H2.5"/><path d="M0 208.9 H2.5"/><path d="M0 213.2 H2.5"/></g></svg><svg class="abs" style="left:0;top:0" width="229.5" height="216.5" viewBox="0 0 229.5 216.5"><defs><linearGradient id="gb" x1="0" y1="0" x2="0" y2="1"><stop offset="0" stop-color="#6c2100"/><stop offset=".35" stop-color="#7e2a03"/><stop offset=".5" stop-color="#a63c07"/><stop offset=".65" stop-color="#7a2803"/><stop offset="1" stop-color="#641e00"/></linearGradient></defs><polygon points="116.9,62.9 207.4,43.1 207.4,172.5 116.9,139.5" fill="url(#gb)"/><polygon points="116.9,82.0 207.4,69.0 207.4,142.0 116.9,128.0" fill="#c64c0c" opacity=".42"/><g stroke="#1c0600" stroke-width=".9"><path d="M117.5 65.1 V138.8" opacity="0.45"/><path d="M118.7 61.3 V139.8" opacity="0.15"/><path d="M120.0 63.1 V141.8" opacity="0.45"/><path d="M121.2 60.6 V140.3" opacity="0.3"/><path d="M122.5 61.1 V141.2" opacity="0.15"/><path d="M123.7 63.2 V140.0" opacity="0.15"/><path d="M125.0 62.2 V142.3" opacity="0.3"/><path d="M126.2 61.7 V142.0" opacity="0.15"/><path d="M127.5 59.3 V144.3" opacity="0.3"/><path d="M128.7 60.5 V143.5" opacity="0.45"/><path d="M130.0 59.8 V145.0" opacity="0.7"/><path d="M131.2 58.7 V144.5" opacity="0.3"/><path d="M132.5 59.5 V144.9" opacity="0.3"/><path d="M133.7 60.0 V145.6" opacity="0.15"/><path d="M135.0 60.2 V145.3" opacity="0.6"/><path d="M136.2 59.0 V147.7" opacity="0.45"/><path d="M137.5 58.1 V147.7" opacity="0.45"/><path d="M138.7 56.9 V146.2" opacity="0.3"/><path d="M140.0 59.8 V148.3" opacity="0.6"/><path d="M141.2 58.5 V146.2" opacity="0.45"/><path d="M142.5 57.5 V149.4" opacity="0.7"/><path d="M143.7 59.3 V148.5" opacity="0.3"/><path d="M145.0 58.3 V149.5" opacity="0.15"/><path d="M146.2 56.3 V149.1" opacity="0.45"/><path d="M147.5 57.0 V150.0" opacity="0.6"/><path d="M148.7 58.2 V150.5" opacity="0.15"/><path d="M150.0 54.4 V151.9" opacity="0.15"/><path d="M151.2 57.9 V152.8" opacity="0.7"/><path d="M152.5 56.5 V153.5" opacity="0.45"/><path d="M153.7 53.4 V152.3" opacity="0.45"/><path d="M155.0 55.5 V152.9" opacity="0.3"/><path d="M156.2 55.9 V151.9" opacity="0.3"/><path d="M157.5 54.1 V155.5" opacity="0.3"/><path d="M158.7 52.6 V154.1" opacity="0.6"/><path d="M160.0 53.1 V153.3" opacity="0.7"/><path d="M161.2 55.2 V154.3" opacity="0.6"/><path d="M162.5 55.4 V156.4" opacity="0.6"/><path d="M163.7 55.0 V154.7" opacity="0.6"/><path d="M165.0 51.5 V157.2" opacity="0.3"/><path d="M166.2 52.5 V157.4" opacity="0.15"/><path d="M167.5 51.5 V156.0" opacity="0.45"/><path d="M168.7 51.5 V158.2" opacity="0.7"/><path d="M170.0 52.5 V158.4" opacity="0.3"/><path d="M171.2 52.1 V159.8" opacity="0.7"/><path d="M172.5 52.8 V160.4" opacity="0.6"/><path d="M173.7 50.5 V159.3" opacity="0.7"/><path d="M175.0 50.6 V159.8" opacity="0.15"/><path d="M176.2 48.7 V159.5" opacity="0.3"/><path d="M177.5 48.6 V161.5" opacity="0.3"/><path d="M178.7 47.9 V160.2" opacity="0.15"/><path d="M180.0 51.4 V162.5" opacity="0.15"/><path d="M181.2 50.8 V162.9" opacity="0.15"/><path d="M182.5 49.6 V164.7" opacity="0.3"/><path d="M183.7 48.2 V161.9" opacity="0.7"/><path d="M185.0 50.5 V163.7" opacity="0.6"/><path d="M186.2 47.5 V162.9" opacity="0.6"/><path d="M187.5 48.9 V164.7" opacity="0.45"/><path d="M188.7 47.7 V164.0" opacity="0.3"/><path d="M190.0 46.9 V166.4" opacity="0.7"/><path d="M191.2 48.2 V165.3" opacity="0.15"/><path d="M192.5 47.6 V165.6" opacity="0.15"/><path d="M193.7 48.2 V166.4" opacity="0.45"/><path d="M195.0 46.4 V168.6" opacity="0.3"/><path d="M196.2 46.6 V168.4" opacity="0.45"/><path d="M197.5 47.0 V169.7" opacity="0.3"/><path d="M198.7 44.3 V168.8" opacity="0.3"/><path d="M200.0 47.2 V170.5" opacity="0.15"/><path d="M201.2 44.0 V170.5" opacity="0.6"/><path d="M202.5 44.5 V172.0" opacity="0.45"/><path d="M203.7 46.2 V170.1" opacity="0.45"/><path d="M205.0 42.5 V171.0" opacity="0.3"/><path d="M206.2 42.7 V172.1" opacity="0.45"/></g><path d="M0 108.5 H229.5" stroke="#ff6a1c" stroke-width="3"/><path d="M116.9 108.5 H207.4" stroke="#ffc8a0" stroke-width="1.5"/><path d="M110.2 0 H121.4 L115.8 11 Z" fill="#19cfd6"/><path d="M0.5 104.1 H10.5 L14.5 108.6 L10.5 113.1 H0.5 Z" fill="#000" stroke="#ff6a1c" stroke-width="1"/><text x="5.8" y="111.2" font-size="7" font-weight="bold" text-anchor="middle" fill="#ff6a1c" font-family="Liberation Sans, sans-serif">C3</text></svg><div class="yl" style="left:6px;top:1.2px">500 mV</div><div class="yl" style="left:6px;top:17.7px">400 mV</div><div class="yl" style="left:6px;top:39.5px">300 mV</div><div class="yl" style="left:6px;top:61.3px">200 mV</div><div class="yl" style="left:6px;top:83.1px">100 mV</div><div class="yl" style="left:6px;top:126.7px">-100 mV</div><div class="yl" style="left:6px;top:148.5px">-200 mV</div><div class="yl" style="left:6px;top:170.3px">-300 mV</div><div class="yl" style="left:6px;top:192.1px">-400 mV</div><div class="yl" style="left:6px;top:207.1px">-500 mV</div><div class="xl" style="left:69.1px;top:203.9px">-80 ns</div><div class="xl" style="left:115.9px;top:203.9px">0 s</div><div class="xl" style="left:162.3px;top:203.9px">80 ns</div><div class="xr" style="right:2px;top:203.9px">200 ns</div></div>
<div class="plot" style="left:607.0px;top:254.0px;width:258.0px;height:106.6px;color:#14c894"><svg class="abs" style="left:0;top:0" width="258.0" height="106.6" viewBox="0 0 258.0 106.6"><g stroke="#7c7c7c" stroke-width="1" stroke-dasharray="1.5 1.1" fill="none" opacity=".64"><path d="M1.3 0 V106.6" opacity=".72"/><path d="M27.1 0 V106.6" opacity=".72"/><path d="M52.9 0 V106.6" opacity=".72"/><path d="M78.7 0 V106.6" opacity=".72"/><path d="M104.5 0 V106.6" opacity=".72"/><path d="M130.3 0 V106.6" opacity=".72"/><path d="M156.1 0 V106.6" opacity=".72"/><path d="M181.9 0 V106.6" opacity=".72"/><path d="M207.7 0 V106.6" opacity=".72"/><path d="M233.5 0 V106.6" opacity=".72"/><path d="M0 10.7 H258.0" /><path d="M0 32.0 H258.0" /><path d="M0 53.3 H258.0" /><path d="M0 74.6 H258.0" /><path d="M0 95.9 H258.0" /></g><path d="M130.3 0 V106.6" stroke="#9a9a9a" stroke-width=".9" stroke-dasharray="1.3 1.5" opacity=".6"/><g stroke="#888" stroke-width=".7" opacity=".5"><path d="M1.3 104.1 V106.6"/><path d="M6.5 104.1 V106.6"/><path d="M11.6 104.1 V106.6"/><path d="M16.8 104.1 V106.6"/><path d="M21.9 104.1 V106.6"/><path d="M27.1 104.1 V106.6"/><path d="M32.3 104.1 V106.6"/><path d="M37.4 104.1 V106.6"/><path d="M42.6 104.1 V106.6"/><path d="M47.7 104.1 V106.6"/><path d="M52.9 104.1 V106.6"/><path d="M58.1 104.1 V106.6"/><path d="M63.2 104.1 V106.6"/><path d="M68.4 104.1 V106.6"/><path d="M73.5 104.1 V106.6"/><path d="M78.7 104.1 V106.6"/><path d="M83.9 104.1 V106.6"/><path d="M89.0 104.1 V106.6"/><path d="M94.2 104.1 V106.6"/><path d="M99.3 104.1 V106.6"/><path d="M104.5 104.1 V106.6"/><path d="M109.7 104.1 V106.6"/><path d="M114.8 104.1 V106.6"/><path d="M120.0 104.1 V106.6"/><path d="M125.1 104.1 V106.6"/><path d="M130.3 104.1 V106.6"/><path d="M135.5 104.1 V106.6"/><path d="M140.6 104.1 V106.6"/><path d="M145.8 104.1 V106.6"/><path d="M150.9 104.1 V106.6"/><path d="M156.1 104.1 V106.6"/><path d="M161.3 104.1 V106.6"/><path d="M166.4 104.1 V106.6"/><path d="M171.6 104.1 V106.6"/><path d="M176.7 104.1 V106.6"/><path d="M181.9 104.1 V106.6"/><path d="M187.1 104.1 V106.6"/><path d="M192.2 104.1 V106.6"/><path d="M197.4 104.1 V106.6"/><path d="M202.5 104.1 V106.6"/><path d="M207.7 104.1 V106.6"/><path d="M212.9 104.1 V106.6"/><path d="M218.0 104.1 V106.6"/><path d="M223.2 104.1 V106.6"/><path d="M228.3 104.1 V106.6"/><path d="M233.5 104.1 V106.6"/><path d="M238.7 104.1 V106.6"/><path d="M243.8 104.1 V106.6"/><path d="M249.0 104.1 V106.6"/><path d="M254.1 104.1 V106.6"/><path d="M0 2.2 H2.5"/><path d="M0 6.4 H2.5"/><path d="M0 10.7 H2.5"/><path d="M0 15.0 H2.5"/><path d="M0 19.2 H2.5"/><path d="M0 23.5 H2.5"/><path d="M0 27.7 H2.5"/><path d="M0 32.0 H2.5"/><path d="M0 36.3 H2.5"/><path d="M0 40.5 H2.5"/><path d="M0 44.8 H2.5"/><path d="M0 49.0 H2.5"/><path d="M0 53.3 H2.5"/><path d="M0 57.6 H2.5"/><path d="M0 61.8 H2.5"/><path d="M0 66.1 H2.5"/><path d="M0 70.3 H2.5"/><path d="M0 74.6 H2.5"/><path d="M0 78.9 H2.5"/><path d="M0 83.1 H2.5"/><path d="M0 87.4 H2.5"/><path d="M0 91.6 H2.5"/><path d="M0 95.9 H2.5"/><path d="M0 100.2 H2.5"/><path d="M0 104.4 H2.5"/></g></svg><svg class="abs" style="left:0;top:0" width="258.0" height="106.6" viewBox="0 0 258.0 106.6"><polyline points="-1.0,53.2 75.4,53.2 91.3,86.1 124.6,20.9 157.4,86.1 190.7,20.9 207.6,53.2 259.0,53.2" fill="none" stroke="#0a8a60" stroke-width="2.2" opacity=".35" stroke-linejoin="round"/><polyline points="-1.0,53.2 75.4,53.2 91.3,86.1 124.6,20.9 157.4,86.1 190.7,20.9 207.6,53.2 259.0,53.2" fill="none" stroke="#14b482" stroke-width="1.2" stroke-linejoin="round"/><g stroke="#18d49a" stroke-width="2.1" stroke-linecap="round" fill="none"><path d="M0.6 53.2 H73.8"/><path d="M209.2 53.2 H257.4"/></g><path d="M124.7 0 H135.9 L130.3 11 Z" fill="#19cfd6"/><path d="M0.5 48.8 H10.5 L14.5 53.3 L10.5 57.8 H0.5 Z" fill="#000" stroke="#18d8a0" stroke-width="1"/><text x="5.8" y="55.9" font-size="7" font-weight="bold" text-anchor="middle" fill="#18d8a0" font-family="Liberation Sans, sans-serif">C6</text></svg><div class="yl" style="left:5.3px;top:1.7px">500 mV</div><div class="yl" style="left:5.3px;top:28.2px">200 mV</div><div class="yl" style="left:5.3px;top:71.4px">-200 mV</div><div class="yl" style="left:5.3px;top:97.2px">-500 mV</div><div class="xl" style="left:76.0px;top:95.5px">-80 ns</div><div class="xl" style="left:131.0px;top:95.5px">0 s</div><div class="xl" style="left:183.0px;top:95.5px">80 ns</div><div class="xr" style="right:-3.5px;top:95.5px">200 ns</div></div>
<div class="plot" style="left:607.0px;top:365.0px;width:128.3px;height:105.5px;color:#e88ac6"><svg class="abs" style="left:0;top:0" width="128.3" height="105.5" viewBox="0 0 128.3 105.5"><g stroke="#7c7c7c" stroke-width="1" stroke-dasharray="1.5 1.1" fill="none" opacity=".64"><path d="M13.1 0 V105.5" opacity=".72"/><path d="M25.9 0 V105.5" opacity=".72"/><path d="M38.7 0 V105.5" opacity=".72"/><path d="M51.6 0 V105.5" opacity=".72"/><path d="M64.4 0 V105.5" opacity=".72"/><path d="M77.2 0 V105.5" opacity=".72"/><path d="M90.1 0 V105.5" opacity=".72"/><path d="M102.9 0 V105.5" opacity=".72"/><path d="M115.7 0 V105.5" opacity=".72"/><path d="M0 10.8 H128.3" /><path d="M0 31.9 H128.3" /><path d="M0 53.0 H128.3" /><path d="M0 74.1 H128.3" /><path d="M0 95.2 H128.3" /></g><path d="M64.4 0 V105.5" stroke="#9a9a9a" stroke-width=".9" stroke-dasharray="1.3 1.5" opacity=".6"/><g stroke="#888" stroke-width=".7" opacity=".5"><path d="M0.2 103.0 V105.5"/><path d="M2.8 103.0 V105.5"/><path d="M5.4 103.0 V105.5"/><path d="M7.9 103.0 V105.5"/><path d="M10.5 103.0 V105.5"/><path d="M13.1 103.0 V105.5"/><path d="M15.6 103.0 V105.5"/><path d="M18.2 103.0 V105.5"/><path d="M20.8 103.0 V105.5"/><path d="M23.3 103.0 V105.5"/><path d="M25.9 103.0 V105.5"/><path d="M28.5 103.0 V105.5"/><path d="M31.0 103.0 V105.5"/><path d="M33.6 103.0 V105.5"/><path d="M36.2 103.0 V105.5"/><path d="M38.7 103.0 V105.5"/><path d="M41.3 103.0 V105.5"/><path d="M43.9 103.0 V105.5"/><path d="M46.4 103.0 V105.5"/><path d="M49.0 103.0 V105.5"/><path d="M51.6 103.0 V105.5"/><path d="M54.1 103.0 V105.5"/><path d="M56.7 103.0 V105.5"/><path d="M59.3 103.0 V105.5"/><path d="M61.8 103.0 V105.5"/><path d="M64.4 103.0 V105.5"/><path d="M67.0 103.0 V105.5"/><path d="M69.5 103.0 V105.5"/><path d="M72.1 103.0 V105.5"/><path d="M74.7 103.0 V105.5"/><path d="M77.2 103.0 V105.5"/><path d="M79.8 103.0 V105.5"/><path d="M82.4 103.0 V105.5"/><path d="M84.9 103.0 V105.5"/><path d="M87.5 103.0 V105.5"/><path d="M90.1 103.0 V105.5"/><path d="M92.6 103.0 V105.5"/><path d="M95.2 103.0 V105.5"/><path d="M97.8 103.0 V105.5"/><path d="M100.3 103.0 V105.5"/><path d="M102.9 103.0 V105.5"/><path d="M105.5 103.0 V105.5"/><path d="M108.0 103.0 V105.5"/><path d="M110.6 103.0 V105.5"/><path d="M113.2 103.0 V105.5"/><path d="M115.7 103.0 V105.5"/><path d="M118.3 103.0 V105.5"/><path d="M120.9 103.0 V105.5"/><path d="M123.4 103.0 V105.5"/><path d="M126.0 103.0 V105.5"/><path d="M0 2.4 H2.5"/><path d="M0 6.6 H2.5"/><path d="M0 10.8 H2.5"/><path d="M0 15.0 H2.5"/><path d="M0 19.2 H2.5"/><path d="M0 23.5 H2.5"/><path d="M0 27.7 H2.5"/><path d="M0 31.9 H2.5"/><path d="M0 36.1 H2.5"/><path d="M0 40.3 H2.5"/><path d="M0 44.6 H2.5"/><path d="M0 48.8 H2.5"/><path d="M0 53.0 H2.5"/><path d="M0 57.2 H2.5"/><path d="M0 61.4 H2.5"/><path d="M0 65.7 H2.5"/><path d="M0 69.9 H2.5"/><path d="M0 74.1 H2.5"/><path d="M0 78.3 H2.5"/><path d="M0 82.5 H2.5"/><path d="M0 86.8 H2.5"/><path d="M0 91.0 H2.5"/><path d="M0 95.2 H2.5"/><path d="M0 99.4 H2.5"/><path d="M0 103.6 H2.5"/></g></svg><svg class="abs" style="left:0;top:0" width="128.3" height="105.5" viewBox="0 0 128.3 105.5"><g fill="#a0608a" opacity=".88"><polygon points="0.0,52.6 1.9,52.0 3.9,51.6 5.8,51.3 7.8,51.2 9.7,51.3 11.6,51.7 13.6,52.1 15.5,52.7 15.5,83.0 13.6,82.1 11.6,81.4 9.7,80.9 7.8,80.7 5.8,80.9 3.9,81.4 1.9,82.1 0.0,83.0"/><polygon points="15.5,21.6 17.5,22.5 19.5,23.2 21.5,23.7 23.5,23.9 25.5,23.7 27.5,23.2 29.5,22.5 31.5,21.6 31.5,52.7 29.5,53.3 27.5,53.8 25.5,54.1 23.5,54.2 21.5,54.1 19.5,53.8 17.5,53.3 15.5,52.7"/><polygon points="31.5,52.7 33.5,52.1 35.5,51.6 37.5,51.3 39.5,51.2 41.5,51.3 43.5,51.6 45.5,52.1 47.5,52.7 47.5,83.0 45.5,82.1 43.5,81.4 41.5,80.9 39.5,80.7 37.5,80.9 35.5,81.4 33.5,82.1 31.5,83.0"/><polygon points="47.5,21.6 49.5,22.5 51.5,23.2 53.5,23.7 55.5,23.9 57.5,23.7 59.5,23.2 61.5,22.5 63.5,21.6 63.5,52.7 61.5,53.3 59.5,53.8 57.5,54.1 55.5,54.2 53.5,54.1 51.5,53.8 49.5,53.3 47.5,52.7"/><polygon points="63.5,52.7 65.5,52.1 67.5,51.6 69.5,51.3 71.5,51.2 73.5,51.3 75.5,51.6 77.5,52.1 79.5,52.7 79.5,83.0 77.5,82.1 75.5,81.4 73.5,80.9 71.5,80.7 69.5,80.9 67.5,81.4 65.5,82.1 63.5,83.0"/><polygon points="79.5,21.6 81.5,22.5 83.5,23.2 85.5,23.7 87.5,23.9 89.5,23.7 91.5,23.2 93.5,22.5 95.5,21.6 95.5,52.7 93.5,53.3 91.5,53.8 89.5,54.1 87.5,54.2 85.5,54.1 83.5,53.8 81.5,53.3 79.5,52.7"/><polygon points="95.5,52.7 97.5,52.1 99.5,51.6 101.5,51.3 103.5,51.2 105.5,51.3 107.5,51.6 109.5,52.1 111.5,52.7 111.5,83.0 109.5,82.1 107.5,81.4 105.5,80.9 103.5,80.7 101.5,80.9 99.5,81.4 97.5,82.1 95.5,83.0"/><polygon points="111.5,21.6 113.5,22.5 115.5,23.2 117.5,23.7 119.5,23.9 121.5,23.7 123.5,23.2 125.5,22.5 127.5,21.6 127.5,52.7 125.5,53.3 123.5,53.8 121.5,54.1 119.5,54.2 117.5,54.1 115.5,53.8 113.5,53.3 111.5,52.7"/><polygon points="127.5,52.7 127.6,52.7 127.7,52.6 127.8,52.6 127.9,52.6 128.0,52.6 128.1,52.5 128.2,52.5 128.3,52.5 128.3,83.0 128.2,82.1 128.1,81.4 128.0,80.9 127.9,80.7 127.8,80.9 127.7,81.4 127.6,82.1 127.5,83.0"/></g><g fill="none" stroke="#f4a8d8" stroke-width="2.3"><polyline points="0.0,83.0 1.9,82.1 3.9,81.4 5.8,80.9 7.8,80.7 9.7,80.9 11.6,81.4 13.6,82.1 15.5,83.0"/><polyline points="15.5,21.6 17.5,22.5 19.5,23.2 21.5,23.7 23.5,23.9 25.5,23.7 27.5,23.2 29.5,22.5 31.5,21.6"/><polyline points="31.5,83.0 33.5,82.1 35.5,81.4 37.5,80.9 39.5,80.7 41.5,80.9 43.5,81.4 45.5,82.1 47.5,83.0"/><polyline points="47.5,21.6 49.5,22.5 51.5,23.2 53.5,23.7 55.5,23.9 57.5,23.7 59.5,23.2 61.5,22.5 63.5,21.6"/><polyline points="63.5,83.0 65.5,82.1 67.5,81.4 69.5,80.9 71.5,80.7 73.5,80.9 75.5,81.4 77.5,82.1 79.5,83.0"/><polyline points="79.5,21.6 81.5,22.5 83.5,23.2 85.5,23.7 87.5,23.9 89.5,23.7 91.5,23.2 93.5,22.5 95.5,21.6"/><polyline points="95.5,83.0 97.5,82.1 99.5,81.4 101.5,80.9 103.5,80.7 105.5,80.9 107.5,81.4 109.5,82.1 111.5,83.0"/><polyline points="111.5,21.6 113.5,22.5 115.5,23.2 117.5,23.7 119.5,23.9 121.5,23.7 123.5,23.2 125.5,22.5 127.5,21.6"/><polyline points="127.5,83.0 127.6,82.1 127.7,81.4 127.8,80.9 127.9,80.7 128.0,80.9 128.1,81.4 128.2,82.1 128.3,83.0"/></g><polyline points="0.0,52.6 0.5,52.4 1.0,52.3 1.5,52.1 2.0,52.0 2.5,51.9 3.0,51.7 3.5,51.6 4.0,51.5 4.5,51.5 5.0,51.4 5.5,51.3 6.0,51.3 6.5,51.2 7.0,51.2 7.5,51.2 8.0,51.2 8.5,51.2 9.0,51.3 9.5,51.3 10.0,51.4 10.5,51.5 11.0,51.5 11.5,51.6 12.0,51.7 12.5,51.9 13.0,52.0 13.5,52.1 14.0,52.3 14.5,52.4 15.0,52.6 15.5,52.7 16.0,52.8 16.5,53.0 17.0,53.1 17.5,53.3 18.0,53.4 18.5,53.5 19.0,53.7 19.5,53.8 20.0,53.9 20.5,53.9 21.0,54.0 21.5,54.1 22.0,54.1 22.5,54.2 23.0,54.2 23.5,54.2 24.0,54.2 24.5,54.2 25.0,54.1 25.5,54.1 26.0,54.0 26.5,53.9 27.0,53.9 27.5,53.8 28.0,53.7 28.5,53.5 29.0,53.4 29.5,53.3 30.0,53.1 30.5,53.0 31.0,52.8 31.5,52.7 32.0,52.6 32.5,52.4 33.0,52.3 33.5,52.1 34.0,52.0 34.5,51.9 35.0,51.7 35.5,51.6 36.0,51.5 36.5,51.5 37.0,51.4 37.5,51.3 38.0,51.3 38.5,51.2 39.0,51.2 39.5,51.2 40.0,51.2 40.5,51.2 41.0,51.3 41.5,51.3 42.0,51.4 42.5,51.5 43.0,51.5 43.5,51.6 44.0,51.7 44.5,51.9 45.0,52.0 45.5,52.1 46.0,52.3 46.5,52.4 47.0,52.6 47.5,52.7 48.0,52.8 48.5,53.0 49.0,53.1 49.5,53.3 50.0,53.4 50.5,53.5 51.0,53.7 51.5,53.8 52.0,53.9 52.5,53.9 53.0,54.0 53.5,54.1 54.0,54.1 54.5,54.2 55.0,54.2 55.5,54.2 56.0,54.2 56.5,54.2 57.0,54.1 57.5,54.1 58.0,54.0 58.5,53.9 59.0,53.9 59.5,53.8 60.0,53.7 60.5,53.5 61.0,53.4 61.5,53.3 62.0,53.1 62.5,53.0 63.0,52.8 63.5,52.7 64.0,52.6 64.5,52.4 65.0,52.3 65.5,52.1 66.0,52.0 66.5,51.9 67.0,51.7 67.5,51.6 68.0,51.5 68.5,51.5 69.0,51.4 69.5,51.3 70.0,51.3 70.5,51.2 71.0,51.2 71.5,51.2 72.0,51.2 72.5,51.2 73.0,51.3 73.5,51.3 74.0,51.4 74.5,51.5 75.0,51.5 75.5,51.6 76.0,51.7 76.5,51.9 77.0,52.0 77.5,52.1 78.0,52.3 78.5,52.4 79.0,52.6 79.5,52.7 80.0,52.8 80.5,53.0 81.0,53.1 81.5,53.3 82.0,53.4 82.5,53.5 83.0,53.7 83.5,53.8 84.0,53.9 84.5,53.9 85.0,54.0 85.5,54.1 86.0,54.1 86.5,54.2 87.0,54.2 87.5,54.2 88.0,54.2 88.5,54.2 89.0,54.1 89.5,54.1 90.0,54.0 90.5,53.9 91.0,53.9 91.5,53.8 92.0,53.7 92.5,53.5 93.0,53.4 93.5,53.3 94.0,53.1 94.5,53.0 95.0,52.8 95.5,52.7 96.0,52.6 96.5,52.4 97.0,52.3 97.5,52.1 98.0,52.0 98.5,51.9 99.0,51.7 99.5,51.6 100.0,51.5 100.5,51.5 101.0,51.4 101.5,51.3 102.0,51.3 102.5,51.2 103.0,51.2 103.5,51.2 104.0,51.2 104.5,51.2 105.0,51.3 105.5,51.3 106.0,51.4 106.5,51.5 107.0,51.5 107.5,51.6 108.0,51.7 108.5,51.9 109.0,52.0 109.5,52.1 110.0,52.3 110.5,52.4 111.0,52.6 111.5,52.7 112.0,52.8 112.5,53.0 113.0,53.1 113.5,53.3 114.0,53.4 114.5,53.5 115.0,53.7 115.5,53.8 116.0,53.9 116.5,53.9 117.0,54.0 117.5,54.1 118.0,54.1 118.5,54.2 119.0,54.2 119.5,54.2 120.0,54.2 120.5,54.2 121.0,54.1 121.5,54.1 122.0,54.0 122.5,53.9 123.0,53.9 123.5,53.8 124.0,53.7 124.5,53.5 125.0,53.4 125.5,53.3 126.0,53.1 126.5,53.0 127.0,52.8 127.5,52.7 128.0,52.6 128.5,52.4" fill="none" stroke="#f4a8d8" stroke-width="2.1"/><path d="M58.8 0 H70.0 L64.4 11 Z" fill="#19cfd6"/><path d="M0.5 48.5 H10.5 L14.5 53.0 L10.5 57.5 H0.5 Z" fill="#000" stroke="#e88ac6" stroke-width="1"/><text x="5.8" y="55.6" font-size="7" font-weight="bold" text-anchor="middle" fill="#e88ac6" font-family="Liberation Sans, sans-serif">C7</text></svg><div class="yl" style="left:5.3px;top:1.5px">5 V</div><div class="yl" style="left:5.3px;top:27.2px;background:none">2 V</div><div class="yl" style="left:5.3px;top:70.2px">-2 V</div><div class="yl" style="left:5.3px;top:96.4px">-5 V</div><div class="xl" style="left:64.6px;top:92.9px">0 s</div><div class="xr" style="right:1px;top:92.9px">200 ns</div></div>
<div class="plot" style="left:739.0px;top:365.0px;width:126.0px;height:105.5px;color:#c07ee8"><svg class="abs" style="left:0;top:0" width="126.0" height="105.5" viewBox="0 0 126.0 105.5"><g stroke="#7c7c7c" stroke-width="1" stroke-dasharray="1.5 1.1" fill="none" opacity=".64"><path d="M0.7 0 V105.5" opacity=".72"/><path d="M13.6 0 V105.5" opacity=".72"/><path d="M26.4 0 V105.5" opacity=".72"/><path d="M39.2 0 V105.5" opacity=".72"/><path d="M52.1 0 V105.5" opacity=".72"/><path d="M64.9 0 V105.5" opacity=".72"/><path d="M77.7 0 V105.5" opacity=".72"/><path d="M90.6 0 V105.5" opacity=".72"/><path d="M103.4 0 V105.5" opacity=".72"/><path d="M116.2 0 V105.5" opacity=".72"/><path d="M0 10.8 H126.0" /><path d="M0 31.9 H126.0" /><path d="M0 53.0 H126.0" /><path d="M0 74.1 H126.0" /><path d="M0 95.2 H126.0" /></g><path d="M64.9 0 V105.5" stroke="#9a9a9a" stroke-width=".9" stroke-dasharray="1.3 1.5" opacity=".6"/><g stroke="#888" stroke-width=".7" opacity=".5"><path d="M0.7 103.0 V105.5"/><path d="M3.3 103.0 V105.5"/><path d="M5.9 103.0 V105.5"/><path d="M8.4 103.0 V105.5"/><path d="M11.0 103.0 V105.5"/><path d="M13.6 103.0 V105.5"/><path d="M16.1 103.0 V105.5"/><path d="M18.7 103.0 V105.5"/><path d="M21.3 103.0 V105.5"/><path d="M23.8 103.0 V105.5"/><path d="M26.4 103.0 V105.5"/><path d="M29.0 103.0 V105.5"/><path d="M31.5 103.0 V105.5"/><path d="M34.1 103.0 V105.5"/><path d="M36.7 103.0 V105.5"/><path d="M39.2 103.0 V105.5"/><path d="M41.8 103.0 V105.5"/><path d="M44.4 103.0 V105.5"/><path d="M46.9 103.0 V105.5"/><path d="M49.5 103.0 V105.5"/><path d="M52.1 103.0 V105.5"/><path d="M54.6 103.0 V105.5"/><path d="M57.2 103.0 V105.5"/><path d="M59.8 103.0 V105.5"/><path d="M62.3 103.0 V105.5"/><path d="M64.9 103.0 V105.5"/><path d="M67.5 103.0 V105.5"/><path d="M70.0 103.0 V105.5"/><path d="M72.6 103.0 V105.5"/><path d="M75.2 103.0 V105.5"/><path d="M77.7 103.0 V105.5"/><path d="M80.3 103.0 V105.5"/><path d="M82.9 103.0 V105.5"/><path d="M85.4 103.0 V105.5"/><path d="M88.0 103.0 V105.5"/><path d="M90.6 103.0 V105.5"/><path d="M93.1 103.0 V105.5"/><path d="M95.7 103.0 V105.5"/><path d="M98.3 103.0 V105.5"/><path d="M100.8 103.0 V105.5"/><path d="M103.4 103.0 V105.5"/><path d="M106.0 103.0 V105.5"/><path d="M108.5 103.0 V105.5"/><path d="M111.1 103.0 V105.5"/><path d="M113.7 103.0 V105.5"/><path d="M116.2 103.0 V105.5"/><path d="M118.8 103.0 V105.5"/><path d="M121.4 103.0 V105.5"/><path d="M123.9 103.0 V105.5"/><path d="M0 2.4 H2.5"/><path d="M0 6.6 H2.5"/><path d="M0 10.8 H2.5"/><path d="M0 15.0 H2.5"/><path d="M0 19.2 H2.5"/><path d="M0 23.5 H2.5"/><path d="M0 27.7 H2.5"/><path d="M0 31.9 H2.5"/><path d="M0 36.1 H2.5"/><path d="M0 40.3 H2.5"/><path d="M0 44.6 H2.5"/><path d="M0 48.8 H2.5"/><path d="M0 53.0 H2.5"/><path d="M0 57.2 H2.5"/><path d="M0 61.4 H2.5"/><path d="M0 65.7 H2.5"/><path d="M0 69.9 H2.5"/><path d="M0 74.1 H2.5"/><path d="M0 78.3 H2.5"/><path d="M0 82.5 H2.5"/><path d="M0 86.8 H2.5"/><path d="M0 91.0 H2.5"/><path d="M0 95.2 H2.5"/><path d="M0 99.4 H2.5"/><path d="M0 103.6 H2.5"/></g></svg><svg class="abs" style="left:0;top:0" width="126.0" height="105.5" viewBox="0 0 126.0 105.5"><g fill="#8449aa" opacity=".88"><polygon points="0.1,52.7 2.1,52.1 4.1,51.6 6.1,51.3 8.1,51.2 10.1,51.3 12.1,51.6 14.1,52.1 16.1,52.7 16.1,83.0 14.1,82.1 12.1,81.4 10.1,80.9 8.1,80.7 6.1,80.9 4.1,81.4 2.1,82.1 0.1,83.0"/><polygon points="16.1,21.6 18.2,22.5 20.2,23.2 22.2,23.7 24.2,23.9 26.2,23.7 28.2,23.2 30.2,22.5 32.2,21.6 32.2,52.7 30.2,53.3 28.2,53.8 26.2,54.1 24.2,54.2 22.2,54.1 20.2,53.8 18.2,53.3 16.1,52.7"/><polygon points="32.2,52.7 34.2,52.1 36.2,51.6 38.2,51.3 40.2,51.2 42.2,51.3 44.2,51.6 46.2,52.1 48.2,52.7 48.2,83.0 46.2,82.1 44.2,81.4 42.2,80.9 40.2,80.7 38.2,80.9 36.2,81.4 34.2,82.1 32.2,83.0"/><polygon points="48.2,21.6 50.3,22.5 52.3,23.2 54.3,23.7 56.3,23.9 58.3,23.7 60.3,23.2 62.3,22.5 64.3,21.6 64.3,52.7 62.3,53.3 60.3,53.8 58.3,54.1 56.3,54.2 54.3,54.1 52.3,53.8 50.3,53.3 48.2,52.7"/><polygon points="64.3,52.7 66.3,52.1 68.3,51.6 70.3,51.3 72.3,51.2 74.3,51.3 76.3,51.6 78.3,52.1 80.3,52.7 80.3,83.0 78.3,82.1 76.3,81.4 74.3,80.9 72.3,80.7 70.3,80.9 68.3,81.4 66.3,82.1 64.3,83.0"/><polygon points="80.3,21.6 82.4,22.5 84.4,23.2 86.4,23.7 88.4,23.9 90.4,23.7 92.4,23.2 94.4,22.5 96.4,21.6 96.4,52.7 94.4,53.3 92.4,53.8 90.4,54.1 88.4,54.2 86.4,54.1 84.4,53.8 82.4,53.3 80.3,52.7"/><polygon points="96.4,52.7 98.4,52.1 100.4,51.6 102.4,51.3 104.4,51.2 106.4,51.3 108.4,51.6 110.4,52.1 112.4,52.7 112.4,83.0 110.4,82.1 108.4,81.4 106.4,80.9 104.4,80.7 102.4,80.9 100.4,81.4 98.4,82.1 96.4,83.0"/><polygon points="112.4,21.6 114.1,22.5 115.8,23.2 117.5,23.7 119.2,23.9 120.9,23.7 122.6,23.2 124.3,22.5 126.0,21.6 126.0,53.4 124.3,53.8 122.6,54.1 120.9,54.2 119.2,54.2 117.5,54.0 115.8,53.6 114.1,53.2 112.4,52.7"/></g><g fill="none" stroke="#d89af6" stroke-width="2.3"><polyline points="0.1,83.0 2.1,82.1 4.1,81.4 6.1,80.9 8.1,80.7 10.1,80.9 12.1,81.4 14.1,82.1 16.1,83.0"/><polyline points="16.1,21.6 18.2,22.5 20.2,23.2 22.2,23.7 24.2,23.9 26.2,23.7 28.2,23.2 30.2,22.5 32.2,21.6"/><polyline points="32.2,83.0 34.2,82.1 36.2,81.4 38.2,80.9 40.2,80.7 42.2,80.9 44.2,81.4 46.2,82.1 48.2,83.0"/><polyline points="48.2,21.6 50.3,22.5 52.3,23.2 54.3,23.7 56.3,23.9 58.3,23.7 60.3,23.2 62.3,22.5 64.3,21.6"/><polyline points="64.3,83.0 66.3,82.1 68.3,81.4 70.3,80.9 72.3,80.7 74.3,80.9 76.3,81.4 78.3,82.1 80.3,83.0"/><polyline points="80.3,21.6 82.4,22.5 84.4,23.2 86.4,23.7 88.4,23.9 90.4,23.7 92.4,23.2 94.4,22.5 96.4,21.6"/><polyline points="96.4,83.0 98.4,82.1 100.4,81.4 102.4,80.9 104.4,80.7 106.4,80.9 108.4,81.4 110.4,82.1 112.4,83.0"/><polyline points="112.4,21.6 114.1,22.5 115.8,23.2 117.5,23.7 119.2,23.9 120.9,23.7 122.6,23.2 124.3,22.5 126.0,21.6"/></g><polyline points="0.0,52.7 0.5,52.6 1.0,52.4 1.5,52.3 2.0,52.2 2.5,52.0 3.0,51.9 3.5,51.8 4.0,51.7 4.5,51.6 5.0,51.5 5.5,51.4 6.0,51.3 6.5,51.3 7.0,51.2 7.5,51.2 8.0,51.2 8.5,51.2 9.0,51.2 9.5,51.3 10.0,51.3 10.5,51.4 11.0,51.4 11.5,51.5 12.0,51.6 12.5,51.7 13.0,51.8 13.5,52.0 14.0,52.1 14.5,52.2 15.0,52.4 15.5,52.5 16.0,52.7 16.5,52.8 17.0,52.9 17.5,53.1 18.0,53.2 18.5,53.4 19.0,53.5 19.5,53.6 20.0,53.7 20.5,53.8 21.0,53.9 21.5,54.0 22.0,54.1 22.5,54.1 23.0,54.2 23.5,54.2 24.0,54.2 24.5,54.2 25.0,54.2 25.5,54.1 26.0,54.1 26.5,54.0 27.0,54.0 27.5,53.9 28.0,53.8 28.5,53.7 29.0,53.6 29.5,53.5 30.0,53.3 30.5,53.2 31.0,53.0 31.5,52.9 32.0,52.8 32.5,52.6 33.0,52.5 33.5,52.3 34.0,52.2 34.5,52.0 35.0,51.9 35.5,51.8 36.0,51.7 36.5,51.6 37.0,51.5 37.5,51.4 38.0,51.3 38.5,51.3 39.0,51.2 39.5,51.2 40.0,51.2 40.5,51.2 41.0,51.2 41.5,51.2 42.0,51.3 42.5,51.3 43.0,51.4 43.5,51.5 44.0,51.6 44.5,51.7 45.0,51.8 45.5,51.9 46.0,52.1 46.5,52.2 47.0,52.3 47.5,52.5 48.0,52.6 48.5,52.8 49.0,52.9 49.5,53.1 50.0,53.2 50.5,53.3 51.0,53.5 51.5,53.6 52.0,53.7 52.5,53.8 53.0,53.9 53.5,54.0 54.0,54.1 54.5,54.1 55.0,54.2 55.5,54.2 56.0,54.2 56.5,54.2 57.0,54.2 57.5,54.2 58.0,54.1 58.5,54.1 59.0,54.0 59.5,53.9 60.0,53.8 60.5,53.7 61.0,53.6 61.5,53.5 62.0,53.4 62.5,53.2 63.0,53.1 63.5,52.9 64.0,52.8 64.5,52.6 65.0,52.5 65.5,52.4 66.0,52.2 66.5,52.1 67.0,51.9 67.5,51.8 68.0,51.7 68.5,51.6 69.0,51.5 69.5,51.4 70.0,51.4 70.5,51.3 71.0,51.3 71.5,51.2 72.0,51.2 72.5,51.2 73.0,51.2 73.5,51.2 74.0,51.3 74.5,51.3 75.0,51.4 75.5,51.5 76.0,51.6 76.5,51.7 77.0,51.8 77.5,51.9 78.0,52.0 78.5,52.2 79.0,52.3 79.5,52.5 80.0,52.6 80.5,52.7 81.0,52.9 81.5,53.0 82.0,53.2 82.5,53.3 83.0,53.4 83.5,53.6 84.0,53.7 84.5,53.8 85.0,53.9 85.5,54.0 86.0,54.0 86.5,54.1 87.0,54.1 87.5,54.2 88.0,54.2 88.5,54.2 89.0,54.2 89.5,54.2 90.0,54.1 90.5,54.1 91.0,54.0 91.5,53.9 92.0,53.8 92.5,53.7 93.0,53.6 93.5,53.5 94.0,53.4 94.5,53.2 95.0,53.1 95.5,53.0 96.0,52.8 96.5,52.7 97.0,52.5 97.5,52.4 98.0,52.2 98.5,52.1 99.0,52.0 99.5,51.8 100.0,51.7 100.5,51.6 101.0,51.5 101.5,51.4 102.0,51.4 102.5,51.3 103.0,51.3 103.5,51.2 104.0,51.2 104.5,51.2 105.0,51.2 105.5,51.2 106.0,51.3 106.5,51.3 107.0,51.4 107.5,51.5 108.0,51.6 108.5,51.7 109.0,51.8 109.5,51.9 110.0,52.0 110.5,52.1 111.0,52.3 111.5,52.4 112.0,52.6 112.5,52.7 113.0,52.9 113.5,53.0 114.0,53.1 114.5,53.3 115.0,53.4 115.5,53.5 116.0,53.7 116.5,53.8 117.0,53.9 117.5,54.0 118.0,54.0 118.5,54.1 119.0,54.1 119.5,54.2 120.0,54.2 120.5,54.2 121.0,54.2 121.5,54.2 122.0,54.1 122.5,54.1 123.0,54.0 123.5,53.9 124.0,53.9 124.5,53.8 125.0,53.6 125.5,53.5 126.0,53.4 126.5,53.3" fill="none" stroke="#d89af6" stroke-width="2.1"/><path d="M59.3 0 H70.5 L64.9 11 Z" fill="#19cfd6"/><path d="M0.5 48.5 H10.5 L14.5 53.0 L10.5 57.5 H0.5 Z" fill="#000" stroke="#c07ee8" stroke-width="1"/><text x="5.8" y="55.6" font-size="7" font-weight="bold" text-anchor="middle" fill="#c07ee8" font-family="Liberation Sans, sans-serif">C8</text></svg><div class="yl" style="left:5.3px;top:1.5px">5 V</div><div class="yl" style="left:5.3px;top:27.2px;background:none">2 V</div><div class="yl" style="left:5.3px;top:70.2px">-2 V</div><div class="yl" style="left:5.3px;top:96.4px">-5 V</div><div class="xl" style="left:65.1px;top:92.9px">0 s</div><div class="xr" style="right:-3.5px;top:92.9px">200 ns</div></div>
<div class="abs" style="left:369.5px;top:33.8px;width:4px;height:436.7px;background:#4d7080;box-shadow:inset 1px 0 0 #86a8b588, inset -1px 0 0 #2a424d"></div>
<div class="abs" style="left:603.0px;top:33.8px;width:4px;height:436.7px;background:#4d7080;box-shadow:inset 1px 0 0 #86a8b588, inset -1px 0 0 #2a424d"></div>
<div class="abs" style="left:735.3px;top:33.8px;width:3.7px;height:215.7px;background:#4d7080;box-shadow:inset 1px 0 0 #86a8b588, inset -1px 0 0 #2a424d"></div>
<div class="abs" style="left:735.3px;top:365.0px;width:3.7px;height:105.5px;background:#4d7080;box-shadow:inset 1px 0 0 #86a8b588, inset -1px 0 0 #2a424d"></div>
<div class="abs" style="left:373.5px;top:249.4px;width:491.5px;height:4.7px;background:#4d7080;box-shadow:inset 0 -1px 0 #86a8b588"></div>
<div class="abs" style="left:607.0px;top:360.6px;width:258.0px;height:4.4px;background:#4d7080;box-shadow:inset 0 -1px 0 #86a8b588"></div>
<div class="abs" style="left:0;top:470.5px;width:865px;height:40.1px;background:#283c45"></div>
<div class="ch" style="left:-5.1px;width:74.9px;"><div class="hd" style="background:#fcf412"><b>C1</b><u></u><i></i></div><div class="sc">40 <small>mV/</small></div><div class="r1">700 MHz</div><div class="r2">DC 1MΩ</div><div class="of">0 V</div></div>
<div class="abs" style="left:69.8px;top:470.5px;width:0.7px;height:40.1px;background:#22363f"></div>
<div class="ch" style="left:70.5px;width:74.9px;"><div class="hd" style="background:#0cee1c"><b>C2</b><u></u><i></i></div><div class="sc">200 <small>mV/</small></div><div class="r1">700 MHz</div><div class="r2">DC 1MΩ</div><div class="of">0 V</div></div>
<div class="abs" style="left:145.4px;top:470.5px;width:0.7px;height:40.1px;background:#22363f"></div>
<div class="ch" style="left:146.1px;width:74.9px;"><div class="hd" style="background:#ff5a14"><b>C3</b><u></u><i></i></div><div class="sc">100 <small>mV/</small></div><div class="r1">1 GHz</div><div class="r2">DC 50Ω</div><div class="of">0 V</div></div>
<div class="abs" style="left:221.1px;top:470.5px;width:0.7px;height:40.1px;background:#22363f"></div>
<div class="ch" style="left:221.8px;width:74.9px;"><div class="hd" style="background:#2f8fee"><b>C4</b><u></u><i></i></div><div class="sc">200 <small>mV/</small></div><div class="r1">700 MHz</div><div class="r2">DC 1MΩ</div><div class="of">0 V</div></div>
<div class="abs" style="left:296.7px;top:470.5px;width:0.7px;height:40.1px;background:#22363f"></div>
<div class="ch" style="left:297.4px;width:74.9px;"><div class="hd" style="background:#f8c08c"><b>C5</b><u></u><i></i></div><div class="sc">200 <small>mV/</small></div><div class="r1">1 GHz</div><div class="r2">DC 50Ω</div><div class="of">0 V</div></div>
<div class="abs" style="left:372.3px;top:470.5px;width:0.7px;height:40.1px;background:#22363f"></div>
<div class="ch" style="left:373.0px;width:74.9px;"><div class="hd" style="background:#14eaa4"><b>C6</b><u></u><i></i></div><div class="sc">100 <small>mV/</small></div><div class="r1">700 MHz</div><div class="r2">DC 1MΩ</div><div class="of">0 V</div></div>
<div class="abs" style="left:447.9px;top:470.5px;width:0.7px;height:40.1px;background:#22363f"></div>
<div class="ch" style="left:448.6px;width:74.9px;"><div class="hd" style="background:#f49ad8"><b>C7</b><u></u><i></i></div><div class="sc">1 <small>V/</small></div><div class="r1">700 MHz</div><div class="r2">DC 1MΩ</div><div class="of">0 V</div></div>
<div class="abs" style="left:523.5px;top:470.5px;width:0.7px;height:40.1px;background:#22363f"></div>
<div class="ch" style="left:524.2px;width:74.9px;"><div class="hd" style="background:#c882f2"><b>C8</b><u></u><i></i></div><div class="sc">1 <small>V/</small></div><div class="r1">700 MHz</div><div class="r2">DC 1MΩ</div><div class="of">0 V</div></div>
<div class="abs" style="left:599.2px;top:470.5px;width:0.7px;height:40.1px;background:#22363f"></div>
<div class="rb" style="left:708.8px;width:21.2px"><div class="cb" style="background:#f28a18"></div><div class="lb">Logic</div></div>
<div class="abs" style="left:707.8px;top:470.5px;width:1px;height:40.1px;background:#22363f"></div>
<div class="rb" style="left:731.0px;width:21.2px"><div class="cb" style="background:#16d8e2"></div><div class="pl">+</div><div class="lb">Math</div></div>
<div class="abs" style="left:730.0px;top:470.5px;width:1px;height:40.1px;background:#22363f"></div>
<div class="rb" style="left:753.3px;width:21.2px"><div class="cb" style="background:#b8bcbc"></div><div class="pl">+</div><div class="lb">Bus</div></div>
<div class="abs" style="left:752.3px;top:470.5px;width:1px;height:40.1px;background:#22363f"></div>
<div class="rb" style="left:775.5px;width:21.2px"><div class="cb" style="background:#f6f010"></div><div class="pl">+</div><div class="lb">Ref</div></div>
<div class="abs" style="left:774.5px;top:470.5px;width:1px;height:40.1px;background:#22363f"></div>
<div class="rb" style="left:797.8px;width:21.2px"><div class="cb" style="background:#f6f010"></div><div class="pl">+</div><div class="lb">Spec</div></div>
<div class="abs" style="left:796.8px;top:470.5px;width:1px;height:40.1px;background:#22363f"></div>
<div class="rb" style="left:820.0px;width:21.2px"><div class="cb" style="background:#e4e4e4"></div><div class="lb">Gen</div></div>
<div class="abs" style="left:819.0px;top:470.5px;width:1px;height:40.1px;background:#22363f"></div>
<div class="abs" style="left:841.3px;top:470.5px;width:1px;height:40.1px;background:#22363f"></div>
<div class="rb" style="left:842.3px;width:22.7px;font-size:8.5px"><div class="abs" style="left:8.4px;top:13.7px;width:9.2px;height:1.6px;background:#fff"></div><div class="abs" style="left:8.4px;top:16.9px;width:9.2px;height:1.6px;background:#fff"></div><div class="lb" style="top:19.4px;left:3px;-webkit-text-stroke:.3px #fff;right:auto;line-height:10px;color:#fff">Menu</div></div>
</div></div></body></html>
